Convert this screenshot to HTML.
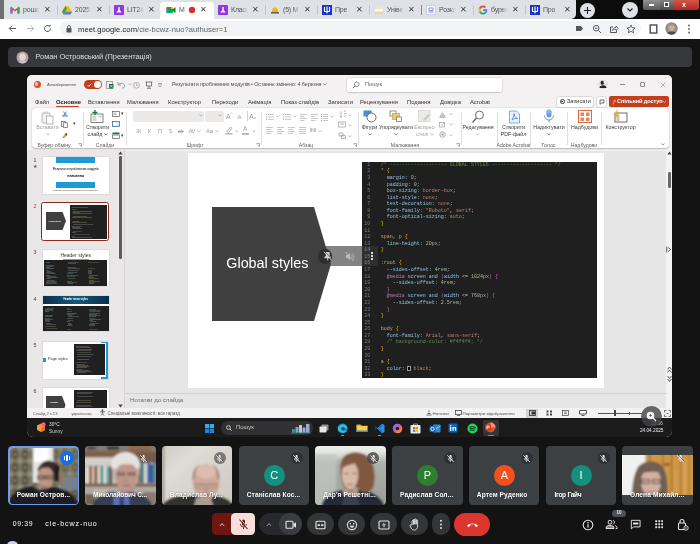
<!DOCTYPE html>
<html>
<head>
<meta charset="utf-8">
<style>
*{box-sizing:border-box;margin:0;padding:0}
html,body{width:700px;height:544px;overflow:hidden}
body{background:#131314;font-family:"Liberation Sans",sans-serif;position:relative;color:#fff}
.a{position:absolute}
.t{position:absolute;white-space:nowrap;line-height:1}
/* chrome */
#tabstrip{left:0;top:0;width:700px;height:19px;background:#0c0c0c}
#tabbg{left:0;top:0;width:576px;height:19px;background:#dee1e6;border-radius:0 0 5px 0}
#toolbar{left:0;top:19px;width:700px;height:20px;background:#fff}
#urlpill{left:60px;top:21px;width:581px;height:15px;border-radius:8px;background:#f1f3f4}
.tab{position:absolute;top:0;height:19px;width:52px}
.tab .ic{position:absolute;left:5px;top:4.500px;width:10px;height:10px}
.tab .tt{position:absolute;left:18px;top:6px;font-size:7px;color:#50545a;-webkit-mask-image:linear-gradient(90deg,#000 60%,transparent);white-space:nowrap;width:17px;overflow:hidden;line-height:8px;letter-spacing:-0.2px}
.tab .x{position:absolute;left:39px;top:5.5px;font-size:8px;color:#3c4043;line-height:8px}
/* presenter bar */
#pbar{left:8px;top:47px;width:684px;height:20px;border-radius:4px;background:#37383b}
/* powerpoint */
#ppt{left:27px;top:75px;width:644.800px;height:362px;border-radius:5px 5px 6px 6px;background:#e6e6e6;overflow:hidden}
#ppt .titlebar{left:0;top:0;width:645px;height:75.500px;background:#f3f1f1}
#ribbon{left:5px;top:33.300px;width:636.500px;height:40px;background:#fff;border-radius:4px;box-shadow:0 0.5px 1.5px rgba(0,0,0,.25)}
#status{left:0;top:333px;width:645px;height:10px;background:#f3f1f1}
#taskbar{left:0;top:343px;width:645px;height:19px;background:#1b1b1b}
#slide{left:161px;top:78px;width:416px;height:234px;background:#fff}
#code{left:335.300px;top:86.700px;width:234.700px;height:216.600px;background:#1f1f1f;overflow:hidden}

.r{position:absolute;white-space:nowrap;line-height:1;font-size:5.300px;color:#3b3a39}
.rg{color:#a19f9d}
.rl{position:absolute;white-space:nowrap;line-height:1;font-size:5.200px;color:#605e5c}
.dv{position:absolute;top:37px;width:1px;height:33px;background:#e1dfdd}
.mt{position:absolute;white-space:nowrap;line-height:1;font-size:5.800px;color:#323130;top:24.500px}

#code{font-family:"Liberation Mono",monospace;font-size:5px;line-height:6.580px;color:#d4d4d4;white-space:pre}
#code .ln{position:absolute;left:0;top:.100px;width:8px;text-align:right;color:#7b7b7b}
#code .cd{position:absolute;left:18.500px;top:.100px;opacity:.88}
.cm{color:#6a9955}.sl{color:#d7ba7d}.pr{color:#9cdcfe}.vl{color:#ce9178}.nm2{color:#b5cea8}.b1{color:#ffd700}.b2{color:#da70d6}.b3{color:#179fff}.kw{color:#c586c0}
/* tiles */
.tile{position:absolute;top:446px;width:70.700px;height:58.800px;border-radius:4px;background:#3c4043;overflow:hidden}
.av{position:absolute;left:25px;top:19px;width:21px;height:21px;border-radius:50%;color:#fff;font-size:11px;text-align:center;line-height:21px}
.nm{position:absolute;left:8px;top:45px;font-size:6.6px;color:#fff;white-space:nowrap;line-height:8px;font-weight:bold;letter-spacing:.1px;text-shadow:0 0 1.500px rgba(0,0,0,.55)}
.mu{position:absolute;left:52px;top:6px;width:12px;height:12px;border-radius:50%;background:rgba(32,33,36,.65)}
/* bottom controls */
.pill{position:absolute;top:513px;height:22px;border-radius:11px;background:#333537}
</style>
</head>
<body>
<div id="wrap" style="position:absolute;left:0;top:0;width:700px;height:544px;will-change:transform">
<!-- CHROME -->
<div class="a" id="tabstrip"></div>
<div class="a" id="tabbg"></div>
<div class="a" style="left:0;top:0;width:4px;height:19px;background:#6f6f70"></div>
<div class="a" style="left:160px;top:2px;width:54px;height:17px;background:#fff;border-radius:4px 4px 0 0"></div>
<!-- tabs -->
<div class="tab" style="left:5px"><svg class="ic" viewBox="0 0 10 10"><path d="M0.5 2v6.5h2V4.6L5 6.6l2.5-2V8.5h2V2L9 1.6 5 4.7 1 1.6z" fill="#ea4335"/><rect x="0.5" y="3" width="2" height="5.5" fill="#4285f4"/><rect x="7.5" y="3" width="2" height="5.5" fill="#34a853"/></svg><div class="tt">рошс</div><div class="x">✕</div></div>
<div class="tab" style="left:57px"><svg class="ic" viewBox="0 0 10 10"><path d="M3.4 1h3.2L10 6.8 8.4 9.5H1.6L0 6.8z" fill="#fbbc04"/><path d="M3.4 1L0 6.8l1.6 2.7L5 3.7z" fill="#34a853"/><path d="M1.6 9.5h6.8L10 6.8H3.2z" fill="#4285f4"/></svg><div class="tt">2025</div><div class="x">✕</div></div>
<div class="tab" style="left:109px"><div class="ic" style="background:#9334e6;border-radius:1px"></div><svg class="ic" viewBox="0 0 10 10"><path d="M4.3 2h1.4v3l2 2.6H2.3l2-2.6z" fill="#fff"/></svg><div class="tt">LIT24</div><div class="x">✕</div></div>
<div class="tab" style="left:161px"><svg class="ic" viewBox="0 0 10 10"><rect x="0.5" y="2" width="6.5" height="6" rx="1" fill="#00ac47"/><path d="M7 4l2.5-2v6L7 6z" fill="#00832d"/><rect x="0.5" y="2" width="2" height="2" fill="#ea4335"/><rect x="5" y="2" width="2" height="2" fill="#ffba00"/><rect x="0.5" y="4" width="2" height="4" fill="#2684fc"/></svg><div class="tt" style="width:8px">М</div><div class="a" style="left:28px;top:6.500px;width:6px;height:6px;border-radius:50%;background:#d93025;box-shadow:0 0 1px #d93025"></div><div class="x">✕</div></div>
<div class="tab" style="left:213px"><div class="ic" style="background:#9334e6;border-radius:1px"></div><svg class="ic" viewBox="0 0 10 10"><path d="M4.3 2h1.4v3l2 2.6H2.3l2-2.6z" fill="#fff"/></svg><div class="tt">Класі</div><div class="x">✕</div></div>
<div class="tab" style="left:265px"><svg class="ic" viewBox="0 0 10 10"><path d="M2 7c0-3 1-4.5 3-4.5S8 4 8 7z" fill="#f4b400"/><rect x="1" y="7" width="8" height="1.6" fill="#5f6368"/></svg><div class="tt">(5) М</div><div class="x">✕</div></div>
<div class="tab" style="left:317px"><div class="ic" style="background:#1a35c4"></div><svg class="ic" viewBox="0 0 10 10"><path d="M2.5 2v4.5h5V2M5 1.5v7" stroke="#fff" stroke-width="1.1" fill="none"/></svg><div class="tt">Пре</div><div class="x">✕</div></div>
<div class="tab" style="left:369px"><svg class="ic" viewBox="0 0 10 10"><path d="M1 8.5c0-5 1.5-7 4-7s4 2 4 7z" fill="#f3e9b5"/><rect x="1" y="4.5" width="8" height="1.4" fill="#fff"/><rect x="1" y="7.5" width="8" height="1.2" fill="#e4d27c"/></svg><div class="tt">Уніве</div><div class="x">✕</div></div>
<div class="tab" style="left:421px"><div class="ic" style="background:#f4f6fb;border:0.5px solid #c9d0e4"></div><svg class="ic" viewBox="0 0 10 10"><path d="M3 3h4v2.5H3zM2.5 7h5" stroke="#8b97c6" stroke-width="1" fill="none"/></svg><div class="tt">Розкл</div><div class="x">✕</div></div>
<div class="tab" style="left:473px"><svg class="ic" viewBox="0 0 10 10"><path d="M9.3 5.1c0-.3 0-.6-.1-.9H5v1.7h2.4c-.1.6-.4 1-.9 1.400l1.400 1.100C8.800 7.600 9.300 6.500 9.300 5.100z" fill="#4285f4"/><path d="M5 9.500c1.200 0 2.200-.4 3-1.100L6.600 7.300c-.4.300-.9.400-1.600.4-1.200 0-2.200-.8-2.500-1.900L1 6.900C1.700 8.400 3.200 9.500 5 9.500z" fill="#34a853"/><path d="M2.500 5.800c-.2-.5-.2-1.100 0-1.600L1 3.100c-.6 1.200-.6 2.600 0 3.800z" fill="#fbbc05"/><path d="M5 2.300c.7 0 1.300.2 1.800.7l1.300-1.300C7.200.9 6.200.5 5 .5 3.200.5 1.700 1.600 1 3.100l1.500 1.100C2.800 3.100 3.800 2.300 5 2.300z" fill="#ea4335"/></svg><div class="tt">бурен</div><div class="x">✕</div></div>
<div class="tab" style="left:525px"><div class="ic" style="background:#1a35c4"></div><svg class="ic" viewBox="0 0 10 10"><path d="M2.500 2v4.500h5V2M5 1.500v7" stroke="#fff" stroke-width="1.100" fill="none"/></svg><div class="tt">Про</div><div class="x">✕</div></div>
<!-- tab separators -->
<div class="a" style="left:57px;top:5px;width:1px;height:10px;background:#9aa0a6;opacity:.4"></div>
<div class="a" style="left:109px;top:5px;width:1px;height:10px;background:#9aa0a6;opacity:.4"></div>
<div class="a" style="left:265px;top:5px;width:1px;height:10px;background:#9aa0a6;opacity:.4"></div>
<div class="a" style="left:317px;top:5px;width:1px;height:10px;background:#9aa0a6;opacity:.4"></div>
<div class="a" style="left:369px;top:5px;width:1px;height:10px;background:#9aa0a6;opacity:.4"></div>
<div class="a" style="left:421px;top:5px;width:1px;height:10px;background:#80868b"></div>
<div class="a" style="left:473px;top:5px;width:1px;height:10px;background:#9aa0a6;opacity:.4"></div>
<div class="a" style="left:525px;top:5px;width:1px;height:10px;background:#9aa0a6;opacity:.4"></div>
<!-- new tab / controls -->
<div class="a" style="left:580px;top:3px;width:15px;height:15px;border-radius:50%;background:#dee1e6"></div>
<svg class="a" style="left:583px;top:6px" width="9" height="9" viewBox="0 0 9 9"><path d="M4.500 1v7M1 4.500h7" stroke="#202124" stroke-width="1.100"/></svg>
<div class="a" style="left:622px;top:2px;width:16px;height:16px;border-radius:50%;background:#dee1e6"></div>
<svg class="a" style="left:626px;top:7px" width="8" height="6" viewBox="0 0 8 6"><path d="M1.500 1.500L4 4l2.500-2.500" stroke="#202124" stroke-width="1.100" fill="none"/></svg>
<div class="a" style="left:643px;top:0;width:17px;height:9.500px;background:linear-gradient(180deg,#8f8f8f,#5a5a5a);border-radius:0 0 0 2px"></div>
<div class="a" style="left:660px;top:0;width:14px;height:9.500px;background:linear-gradient(180deg,#7f7f7f,#4c4c4c)"></div>
<div class="a" style="left:674px;top:0;width:25px;height:9.500px;background:linear-gradient(180deg,#d4574a,#b3291d);border-radius:0 0 2px 0"></div>
<div class="a" style="left:649px;top:4px;width:5px;height:2px;background:#fff"></div>
<div class="a" style="left:664px;top:2px;width:5px;height:5px;border:1px solid #fff;background:#444"></div>
<div class="t" style="left:682px;top:1px;font-size:7px;font-weight:bold;color:#fff">x</div>
<!-- toolbar -->
<div class="a" id="toolbar"></div>
<div class="a" id="urlpill"></div>
<svg class="a" style="left:8px;top:24px" width="9" height="9" viewBox="0 0 9 9"><path d="M8 4.500H1.500M4.300 1.500L1.300 4.500l3 3" stroke="#54585d" stroke-width="1" fill="none"/></svg>
<svg class="a" style="left:26px;top:24px" width="9" height="9" viewBox="0 0 9 9"><path d="M1 4.500h6.500M4.700 1.500l3 3-3 3" stroke="#b0b3b8" stroke-width="1" fill="none"/></svg>
<svg class="a" style="left:43px;top:24px" width="9" height="9" viewBox="0 0 9 9"><path d="M7.500 4.500a3 3 0 1 1-1-2.200" stroke="#54585d" stroke-width="1" fill="none"/><path d="M5.300 2.600h2.200V.4z" fill="#54585d"/></svg>
<svg class="a" style="left:66px;top:25px" width="6" height="8" viewBox="0 0 6 8"><rect x="0.500" y="3" width="5" height="4.500" rx=".6" fill="#54585d"/><path d="M1.500 3V2a1.500 1.500 0 0 1 3 0v1" stroke="#54585d" stroke-width=".9" fill="none"/></svg>
<div class="t" style="left:78px;top:25.500px;font-size:7.600px;color:#202124;letter-spacing:.05px">meet.google.com<span style="color:#5f6368">/cie-bcwz-nuo?authuser=1</span></div>
<svg class="a" style="left:575px;top:25px" width="9" height="7" viewBox="0 0 9 7"><path d="M1 1h5l2 2.500-2 2.500H1z" fill="#54585d"/></svg>
<svg class="a" style="left:592px;top:24px" width="10" height="10" viewBox="0 0 10 10"><circle cx="4.200" cy="4.200" r="2.800" stroke="#54585d" stroke-width="1" fill="none"/><path d="M6.300 6.300L9 9M3 4.200h2.400" stroke="#54585d" stroke-width="1"/></svg>
<svg class="a" style="left:609px;top:24px" width="10" height="10" viewBox="0 0 10 10"><path d="M4 3H1.500v5.500h6V6.500" stroke="#54585d" stroke-width="1" fill="none"/><path d="M3.500 6.500C3.800 4.500 5 3.500 7 3.500V2l2.300 2.300L7 6.500V5.200c-1.500 0-2.700.3-3.500 1.300z" fill="none" stroke="#54585d" stroke-width=".8"/></svg>
<svg class="a" style="left:626px;top:24px" width="10" height="10" viewBox="0 0 10 10"><path d="M5 1l1.200 2.700 2.900.3-2.200 1.900.7 2.900L5 7.300 2.400 8.800l.7-2.900L.9 4l2.900-.3z" stroke="#54585d" stroke-width=".9" fill="none"/></svg>
<svg class="a" style="left:649px;top:24px" width="9" height="10" viewBox="0 0 9 10"><rect x="1.200" y="1" width="6.600" height="8" stroke="#3c4043" stroke-width="1.300" fill="#fff"/></svg>
<svg class="a" style="left:665px;top:22px" width="13" height="13" viewBox="0 0 13 13"><defs><clipPath id="cav"><circle cx="6.500" cy="6.500" r="6.200"/></clipPath></defs><g clip-path="url(#cav)"><rect width="13" height="13" fill="#8a8f98"/><ellipse cx="6.500" cy="5.500" rx="3.200" ry="3.600" fill="#d9a98c"/><path d="M2.500 4.500c.5-3 7.500-3 8 0-1-1.200-7-1.200-8 0z" fill="#b5845e"/><ellipse cx="6.500" cy="13" rx="5.500" ry="3.500" fill="#4a4f5a"/></g></svg>
<svg class="a" style="left:687px;top:24px" width="4" height="10" viewBox="0 0 4 10"><circle cx="2" cy="1.500" r=".9" fill="#54585d"/><circle cx="2" cy="5" r=".9" fill="#54585d"/><circle cx="2" cy="8.500" r=".9" fill="#54585d"/></svg>
<!-- PRESENTER BAR -->
<div class="a" id="pbar"></div>
<svg class="a" style="left:16px;top:50.500px" width="13" height="13" viewBox="0 0 13 13"><defs><clipPath id="pav"><circle cx="6.500" cy="6.500" r="6"/></clipPath></defs><g clip-path="url(#pav)"><rect width="13" height="13" fill="#a9a3a6"/><ellipse cx="6.500" cy="6" rx="3.300" ry="3.800" fill="#e9d3cf"/><ellipse cx="6.500" cy="13.500" rx="6" ry="4" fill="#c9c3cc"/></g></svg>
<div class="t" style="left:35.500px;top:53px;font-size:7.450px;color:#dcdee1;letter-spacing:-.05px" id="ptxt">Роман Островський (Презентація)</div>
<!-- POWERPOINT -->
<div class="a" id="ppt">
  <div class="a titlebar"></div>
  <div class="a" style="left:6.5px;top:5.5px;width:7px;height:7px;border-radius:50%;background:#d35230"></div>
  <div class="a" style="left:8px;top:7px;width:3px;height:4px;border-radius:50%;background:#f7c9b9"></div>
  <div class="r" style="left:20px;top:7.500px;font-size:4.200px;letter-spacing:-.25px;color:#555" id="autos">Автозбереження</div>
  <div class="a" style="left:57px;top:4.8px;width:17.500px;height:9.500px;border-radius:5px;background:#c43e1c"></div>
  <div class="a" style="left:66.5px;top:6px;width:7px;height:7px;border-radius:50%;background:#fff"></div>
  <svg class="a" style="left:59.5px;top:7.5px" width="5" height="4" viewBox="0 0 5 4"><path d="M.6 2l1.300 1.300L4.400.6" stroke="#fff" stroke-width=".8" fill="none"/></svg>
  <svg class="a" style="left:78.5px;top:5.5px" width="8" height="8" viewBox="0 0 8 8"><rect x=".5" y=".5" width="6" height="7" fill="none" stroke="#8a8886" stroke-width=".7"/><rect x="3" y="3" width="4.500" height="4.500" fill="#107c41"/><path d="M4 4l2.500 2.500M6.500 4L4 6.500" stroke="#fff" stroke-width=".6"/></svg>
  <svg class="a" style="left:90px;top:5.5px" width="9" height="8" viewBox="0 0 9 8"><path d="M1 1v3h3M1.300 4C2.500 2 5.500 1.500 7 3.500S7 7 5 7" stroke="#8a8886" stroke-width=".8" fill="none"/></svg>
  <div class="r rg" style="left:100.5px;top:7.5px;font-size:4px"><svg width="3.800" height="2.600" viewBox="0 0 6 4" style="vertical-align:middle;overflow:visible"><path d="M.6.600L3 3.200 5.400.600" stroke="currentColor" fill="none" stroke-width="1"/></svg></div>
  <svg class="a" style="left:105px;top:5.5px" width="9" height="8" viewBox="0 0 9 8"><circle cx="4.500" cy="4.300" r="2.900" stroke="#a19f9d" stroke-width=".8" fill="none"/><path d="M4.500 2.500v2h1.500" stroke="#a19f9d" stroke-width=".7" fill="none"/></svg>
  <svg class="a" style="left:117.5px;top:5.5px" width="8" height="8" viewBox="0 0 8 8"><path d="M.5 1h7M1.500 1v4h5V1M4 5v2M2 7.300h4" stroke="#605e5c" stroke-width=".8" fill="none"/></svg>
  <svg class="a" style="left:130px;top:7.5px" width="6" height="5" viewBox="0 0 6 5"><path d="M1 .8h4M1.500 2.300L3 3.800l1.500-1.500" stroke="#605e5c" stroke-width=".7" fill="none"/></svg>
  <div class="r" style="left:145px;top:7px;font-size:5.420px;letter-spacing:-.1px;color:#505050">Результати проблемних модулів • Останнє змінено: 4 березня <svg width="3.800" height="2.600" viewBox="0 0 6 4" style="vertical-align:middle;overflow:visible"><path d="M.6.600L3 3.200 5.400.600" stroke="currentColor" fill="none" stroke-width="1"/></svg></div>
  <div class="a" style="left:320px;top:3px;width:155px;height:13.500px;border-radius:2px;background:#fff;box-shadow:0 0 0 .5px #d8d6d4, 0 .5px 1px rgba(0,0,0,.2)"></div>
  <svg class="a" style="left:325px;top:5.5px" width="8" height="8" viewBox="0 0 8 8"><circle cx="4.700" cy="3.300" r="2.300" stroke="#605e5c" stroke-width=".7" fill="none"/><path d="M3 5L.8 7.200" stroke="#605e5c" stroke-width=".8"/></svg>
  <div class="r" style="left:338px;top:6.8px;font-size:5.600px;color:#605e5c">Пошук</div>
  <svg class="a" style="left:571px;top:4px" width="10" height="11" viewBox="0 0 10 11"><circle cx="5" cy="5.500" r="4.800" fill="#e1dfdd"/><circle cx="4.500" cy="3.800" r="2" fill="#252423"/><path d="M1.500 9c.3-2 1.500-2.800 3.500-2.800S8.200 7 8.500 9z" fill="#252423"/><rect x="5.500" y="2" width="2.500" height="2.500" fill="#fff" opacity=".8"/></svg>
  <div class="a" style="left:593px;top:9.3px;width:5px;height:.7px;background:#8a8886"></div>
  <div class="a" style="left:613px;top:7px;width:5px;height:5px;border:.7px solid #8a8886;border-radius:1px"></div>
  <svg class="a" style="left:633px;top:7px" width="6" height="6" viewBox="0 0 6 6"><path d="M.7.700l4.600 4.600M5.300.700L.7 5.300" stroke="#8a8886" stroke-width=".6"/></svg>
  <div class="mt" style="left:8px">Файл</div>
  <div class="mt" style="left:29px;font-weight:bold;color:#201f1e">Основне</div>
  <div class="mt" style="left:61px">Вставлення</div>
  <div class="mt" style="left:100px">Малювання</div>
  <div class="mt" style="left:141px">Конструктор</div>
  <div class="mt" style="left:185px">Переходи</div>
  <div class="mt" style="left:221px">Анімація</div>
  <div class="mt" style="left:254px">Показ слайдів</div>
  <div class="mt" style="left:301px">Записати</div>
  <div class="mt" style="left:333px">Рецензування</div>
  <div class="mt" style="left:380px">Подання</div>
  <div class="mt" style="left:413px">Довідка</div>
  <div class="mt" style="left:443px">Acrobat</div>
  <div class="a" style="left:29px;top:31px;width:23px;height:1.300px;background:#c43e1c;border-radius:1px"></div>
  <div class="a" style="left:530px;top:21.5px;width:36px;height:10px;border-radius:2px;background:#fff;box-shadow:0 0 0 .5px #c8c6c4"></div>
  <div class="a" style="left:533px;top:24.3px;width:4.500px;height:4.500px;border-radius:50%;border:.8px solid #444"></div>
  <div class="a" style="left:534.4px;top:25.7px;width:1.700px;height:1.700px;border-radius:50%;background:#444"></div>
  <div class="r" style="left:540px;top:24px;font-size:5.500px;color:#323130">Записати</div>
  <div class="a" style="left:570px;top:21.5px;width:8.500px;height:10px;border-radius:2px;background:#fff;box-shadow:0 0 0 .5px #c8c6c4"></div>
  <svg class="a" style="left:571.5px;top:23.5px" width="6" height="6" viewBox="0 0 6 6"><path d="M1 1h4v3H2.500L1 5.300z" stroke="#323130" stroke-width=".7" fill="none"/></svg>
  <div class="a" style="left:582px;top:21px;width:59.500px;height:10.500px;border-radius:2px;background:#c43e1c"></div>
  <div class="r" style="left:590px;top:23.8px;font-size:5.600px;color:#fff;font-weight:bold;letter-spacing:-.1px">Спільний доступ</div>
  <svg class="a" style="left:584.5px;top:23.5px" width="5" height="6" viewBox="0 0 5 6"><path d="M1 5.500L2.500.8 4 3" stroke="#f7c9b9" stroke-width=".7" fill="none"/></svg>
  <svg class="a" style="left:635px;top:25px" width="5" height="4" viewBox="0 0 5 4"><path d="M.8.800L2.500 2.500 4.200.800" stroke="#f7c9b9" stroke-width=".7" fill="none"/></svg>
  <div class="a" id="ribbon">
<svg class="a" style="left:9px;top:1.5px" width="13" height="15" viewBox="0 0 13 15"><rect x="1" y="3" width="8" height="10" rx="1" fill="#f3f2f1" stroke="#b3b0ad" stroke-width=".9"/><rect x="3" y="1.500" width="4" height="2.500" rx=".8" fill="#d2d0ce"/><rect x="5.500" y="6" width="6.500" height="8" fill="#fff" stroke="#b3b0ad" stroke-width=".9"/></svg>
<div class="r rg" style="left:-14.5px;width:60px;text-align:center;top:17px;">Вставити</div>
<div class="r rg" style="left:-14.5px;width:60px;text-align:center;top:23px;font-size:5px"><svg width="3.800" height="2.600" viewBox="0 0 6 4" style="vertical-align:middle;overflow:visible"><path d="M.6.600L3 3.200 5.400.600" stroke="currentColor" fill="none" stroke-width="1"/></svg></div>
<svg class="a" style="left:29.5px;top:3px" width="6" height="6" viewBox="0 0 6 6"><path d="M1.500 .5l2.500 4M4.500.5L2 4.500" stroke="#2b579a" stroke-width=".7"/><circle cx="1.500" cy="5" r=".9" fill="none" stroke="#2b579a" stroke-width=".6"/><circle cx="4.500" cy="5" r=".9" fill="none" stroke="#2b579a" stroke-width=".6"/></svg>
<svg class="a" style="left:29px;top:12.5px" width="7" height="7" viewBox="0 0 7 7"><rect x=".5" y=".5" width="4" height="5" fill="#fff" stroke="#605e5c" stroke-width=".7"/><rect x="2.300" y="1.800" width="4" height="4.700" fill="#fff" stroke="#605e5c" stroke-width=".7"/></svg>
<div class="r" style="left:40.5px;top:14px;font-size:4.500px;color:#444">▾</div>
<svg class="a" style="left:29px;top:23.5px" width="7" height="7" viewBox="0 0 7 7"><path d="M1 5.500l2.500-3 2 1.500-2.500 2.500z" fill="#e9a33a"/><path d="M3.500 2.500L5 .8l1.500 1.200L5.500 4z" fill="#605e5c"/></svg>
<div class="rl" style="left:-8px;width:60px;text-align:center;top:35px;">Буфер обміну</div>
<svg class="a" style="left:45.5px;top:35px" width="4" height="4" viewBox="0 0 4 4"><path d="M.5.500h3v3M3.500 3.500l-2-2" stroke="#605e5c" stroke-width=".5" fill="none"/></svg>
<div class="a" style="left:51px;top:4px;width:1px;height:33px;background:#e3e1df"></div>
<svg class="a" style="left:57.5px;top:1.5px" width="16" height="14" viewBox="0 0 16 14"><rect x="1" y="4" width="12" height="8.500" fill="#fff" stroke="#797775" stroke-width=".9"/><rect x="2.500" y="5.500" width="4" height="5.500" fill="#d8d6d4"/><path d="M5 0v5M2.500 2.500h5" stroke="#107c41" stroke-width="1.300"/><rect x="8" y="5.500" width="4" height="2" fill="#d8d6d4"/></svg>
<div class="r" style="left:35.5px;width:60px;text-align:center;top:17px;">Створити</div>
<div class="r" style="left:35.5px;width:60px;text-align:center;top:23.3px;">слайд <svg width="3.800" height="2.600" viewBox="0 0 6 4" style="vertical-align:middle;overflow:visible"><path d="M.6.600L3 3.200 5.400.600" stroke="currentColor" fill="none" stroke-width="1"/></svg></div>
<svg class="a" style="left:79.5px;top:2.5px" width="8" height="6" viewBox="0 0 8 6"><rect x=".5" y=".5" width="7" height="5" fill="#fff" stroke="#605e5c" stroke-width=".7"/><rect x="1.500" y="1.500" width="3" height="3" fill="#c8c6c4"/></svg>
<div class="r" style="left:88.5px;top:3.5px;font-size:4.500px;color:#444">▾</div>
<svg class="a" style="left:79.5px;top:13px" width="8" height="6" viewBox="0 0 8 6"><rect x=".5" y=".5" width="7" height="5" fill="#deecf9" stroke="#2b579a" stroke-width=".7"/><rect x="1.500" y="1.500" width="3" height="3" fill="#fff"/></svg>
<svg class="a" style="left:79.5px;top:23.5px" width="8" height="7" viewBox="0 0 8 7"><rect x=".5" y=".5" width="7" height="1.800" fill="#107c41"/><rect x=".5" y="3" width="7" height="3.500" fill="#fff" stroke="#605e5c" stroke-width=".7"/></svg>
<div class="r" style="left:88.5px;top:25.5px;font-size:4.500px;color:#444">▾</div>
<div class="rl" style="left:43px;width:60px;text-align:center;top:35px;">Слайди</div>
<div class="a" style="left:94px;top:4px;width:1px;height:33px;background:#e3e1df"></div>
<div class="a" style="left:100.5px;top:3px;width:71.500px;height:10.500px;background:#ebe9e8;border-radius:2px"></div>
<div class="a" style="left:173px;top:3px;width:18.500px;height:10.500px;background:#ebe9e8;border-radius:2px"></div>
<div class="r rg" style="left:166.5px;top:5px;font-size:4.500px"><svg width="3.800" height="2.600" viewBox="0 0 6 4" style="vertical-align:middle;overflow:visible"><path d="M.6.600L3 3.200 5.400.600" stroke="currentColor" fill="none" stroke-width="1"/></svg></div>
<div class="r rg" style="left:186px;top:5px;font-size:4.500px"><svg width="3.800" height="2.600" viewBox="0 0 6 4" style="vertical-align:middle;overflow:visible"><path d="M.6.600L3 3.200 5.400.600" stroke="currentColor" fill="none" stroke-width="1"/></svg></div>
<div class="r rg" style="left:194px;top:4.5px;font-size:7px">A<span style="font-size:3.500px;vertical-align:top">^</span></div>
<div class="r rg" style="left:205.5px;top:5.5px;font-size:6px">A<span style="font-size:3.500px;vertical-align:top">ˇ</span></div>
<div class="a" style="left:215px;top:3px;width:.7px;height:10px;background:#d2d0ce"></div>
<div class="r rg" style="left:217px;top:4.5px;font-size:7px">A<span style="font-size:4px">ᴏ</span></div>
<div class="r rg" style="left:104px;top:19.5px;font-size:6px">Ж</div>
<div class="r rg" style="left:115.5px;top:19.5px;font-size:6px">К</div>
<div class="r rg" style="left:126px;top:19.5px;font-size:6px">П</div>
<div class="r rg" style="left:136.5px;top:19.5px;font-size:6px">S</div>
<div class="r rg" style="left:146px;top:20.5px;font-size:5px;text-decoration:line-through">ab</div>
<div class="r rg" style="left:156.5px;top:19.5px;font-size:6px;letter-spacing:-.5px">AV</div>
<div class="r rg" style="left:165px;top:21px;font-size:4px"><svg width="3.800" height="2.600" viewBox="0 0 6 4" style="vertical-align:middle;overflow:visible"><path d="M.6.600L3 3.200 5.400.600" stroke="currentColor" fill="none" stroke-width="1"/></svg></div>
<div class="r rg" style="left:174px;top:19.5px;font-size:6px;letter-spacing:-.3px">Aa</div>
<div class="r rg" style="left:183px;top:21px;font-size:4px"><svg width="3.800" height="2.600" viewBox="0 0 6 4" style="vertical-align:middle;overflow:visible"><path d="M.6.600L3 3.200 5.400.600" stroke="currentColor" fill="none" stroke-width="1"/></svg></div>
<svg class="a" style="left:192.5px;top:18px" width="8" height="9" viewBox="0 0 8 9"><path d="M2 5.500L5.500 1l1.500 1.200L3.500 6.500z" fill="none" stroke="#a19f9d" stroke-width=".7"/><rect x=".5" y="7" width="7" height="1.600" fill="#bdbbb9"/></svg>
<div class="r rg" style="left:202.5px;top:21px;font-size:4px"><svg width="3.800" height="2.600" viewBox="0 0 6 4" style="vertical-align:middle;overflow:visible"><path d="M.6.600L3 3.200 5.400.600" stroke="currentColor" fill="none" stroke-width="1"/></svg></div>
<div class="r rg" style="left:211px;top:18px;font-size:6.500px">A</div>
<div class="a" style="left:210px;top:25px;width:7px;height:1.600px;background:#bdbbb9"></div>
<div class="r rg" style="left:220px;top:21px;font-size:4px"><svg width="3.800" height="2.600" viewBox="0 0 6 4" style="vertical-align:middle;overflow:visible"><path d="M.6.600L3 3.200 5.400.600" stroke="currentColor" fill="none" stroke-width="1"/></svg></div>
<div class="rl" style="left:133px;width:60px;text-align:center;top:35px;">Шрифт</div>
<svg class="a" style="left:223.5px;top:35px" width="4" height="4" viewBox="0 0 4 4"><path d="M.5.500h3v3M3.500 3.500l-2-2" stroke="#605e5c" stroke-width=".5" fill="none"/></svg>
<div class="a" style="left:229px;top:4px;width:1px;height:33px;background:#e3e1df"></div>
<svg class="a" style="left:233.5px;top:5.5px" width="8" height="7.8999999999999995" viewBox="0 0 8 7.8999999999999995"><rect x="2" y="0.3" width="6" height=".7" fill="#b1afad"/><rect x="0" y="0.1" width="1" height="1" fill="#a19f9d"/><rect x="2" y="2.5999999999999996" width="6" height=".7" fill="#b1afad"/><rect x="0" y="2.4" width="1" height="1" fill="#a19f9d"/><rect x="2" y="4.8999999999999995" width="6" height=".7" fill="#b1afad"/><rect x="0" y="4.699999999999999" width="1" height="1" fill="#a19f9d"/></svg>
<div class="r rg" style="left:243.5px;top:6px;font-size:4px"><svg width="3.800" height="2.600" viewBox="0 0 6 4" style="vertical-align:middle;overflow:visible"><path d="M.6.600L3 3.200 5.400.600" stroke="currentColor" fill="none" stroke-width="1"/></svg></div>
<svg class="a" style="left:250.5px;top:5.5px" width="8" height="7.8999999999999995" viewBox="0 0 8 7.8999999999999995"><rect x="2" y="0.3" width="6" height=".7" fill="#b1afad"/><rect x="0" y="0.1" width="1" height="1" fill="#a19f9d"/><rect x="2" y="2.5999999999999996" width="6" height=".7" fill="#b1afad"/><rect x="0" y="2.4" width="1" height="1" fill="#a19f9d"/><rect x="2" y="4.8999999999999995" width="6" height=".7" fill="#b1afad"/><rect x="0" y="4.699999999999999" width="1" height="1" fill="#a19f9d"/></svg>
<div class="r rg" style="left:260.5px;top:6px;font-size:4px"><svg width="3.800" height="2.600" viewBox="0 0 6 4" style="vertical-align:middle;overflow:visible"><path d="M.6.600L3 3.200 5.400.600" stroke="currentColor" fill="none" stroke-width="1"/></svg></div>
<svg class="a" style="left:267.5px;top:5.5px" width="7" height="9" viewBox="0 0 7 9"><rect x="0" y="0.3" width="7" height=".7" fill="#b1afad"/><rect x="0" y="2.3" width="4.5" height=".7" fill="#b1afad"/><rect x="0" y="4.3" width="7" height=".7" fill="#b1afad"/><rect x="0" y="6.3" width="4.5" height=".7" fill="#b1afad"/></svg>
<svg class="a" style="left:278.5px;top:5.5px" width="7" height="9" viewBox="0 0 7 9"><rect x="0" y="0.3" width="7" height=".7" fill="#b1afad"/><rect x="0" y="2.3" width="4.5" height=".7" fill="#b1afad"/><rect x="0" y="4.3" width="7" height=".7" fill="#b1afad"/><rect x="0" y="6.3" width="4.5" height=".7" fill="#b1afad"/></svg>
<svg class="a" style="left:289px;top:5.5px" width="7" height="9" viewBox="0 0 7 9"><rect x="2" y="0.3" width="5" height=".7" fill="#b1afad"/><rect x="0" y="0.1" width="1" height="1" fill="#a19f9d"/><rect x="2" y="2.3" width="5" height=".7" fill="#b1afad"/><rect x="0" y="2.1" width="1" height="1" fill="#a19f9d"/><rect x="2" y="4.3" width="5" height=".7" fill="#b1afad"/><rect x="0" y="4.1" width="1" height="1" fill="#a19f9d"/><rect x="2" y="6.3" width="5" height=".7" fill="#b1afad"/><rect x="0" y="6.1" width="1" height="1" fill="#a19f9d"/></svg>
<div class="r rg" style="left:298px;top:6px;font-size:4px"><svg width="3.800" height="2.600" viewBox="0 0 6 4" style="vertical-align:middle;overflow:visible"><path d="M.6.600L3 3.200 5.400.600" stroke="currentColor" fill="none" stroke-width="1"/></svg></div>
<svg class="a" style="left:233.5px;top:18.5px" width="7" height="9" viewBox="0 0 7 9"><rect x="0" y="0.3" width="7" height=".7" fill="#b1afad"/><rect x="0" y="2.3" width="5" height=".7" fill="#b1afad"/><rect x="0" y="4.3" width="7" height=".7" fill="#b1afad"/><rect x="0" y="6.3" width="5" height=".7" fill="#b1afad"/></svg>
<svg class="a" style="left:244.5px;top:18.5px" width="7" height="9" viewBox="0 0 7 9"><rect x="0" y="0.3" width="7" height=".7" fill="#b1afad"/><rect x="0" y="2.3" width="5" height=".7" fill="#b1afad"/><rect x="0" y="4.3" width="7" height=".7" fill="#b1afad"/><rect x="0" y="6.3" width="5" height=".7" fill="#b1afad"/></svg>
<svg class="a" style="left:255.5px;top:18.5px" width="7" height="9" viewBox="0 0 7 9"><rect x="0" y="0.3" width="7" height=".7" fill="#b1afad"/><rect x="0" y="2.3" width="5" height=".7" fill="#b1afad"/><rect x="0" y="4.3" width="7" height=".7" fill="#b1afad"/><rect x="0" y="6.3" width="5" height=".7" fill="#b1afad"/></svg>
<svg class="a" style="left:266.5px;top:18.5px" width="7" height="9" viewBox="0 0 7 9"><rect x="0" y="0.3" width="7" height=".7" fill="#b1afad"/><rect x="0" y="2.3" width="7" height=".7" fill="#b1afad"/><rect x="0" y="4.3" width="7" height=".7" fill="#b1afad"/><rect x="0" y="6.3" width="7" height=".7" fill="#b1afad"/></svg>
<svg class="a" style="left:278px;top:19px" width="6" height="6" viewBox="0 0 6 6"><rect x="0" y="1" width="2.500" height="4" fill="#c8c6c4"/><rect x="3.500" y="1" width="2.500" height="4" fill="#c8c6c4"/></svg>
<div class="r rg" style="left:286px;top:21px;font-size:4px"><svg width="3.800" height="2.600" viewBox="0 0 6 4" style="vertical-align:middle;overflow:visible"><path d="M.6.600L3 3.200 5.400.600" stroke="currentColor" fill="none" stroke-width="1"/></svg></div>
<svg class="a" style="left:306.5px;top:2px" width="8" height="9" viewBox="0 0 8 9"><path d="M2 1v6M1 6l1 1.500L3 6M5 1h2M5 3.500h2.500M5 6h2" stroke="#a19f9d" stroke-width=".7" fill="none"/></svg>
<div class="r rg" style="left:315.5px;top:5px;font-size:4px"><svg width="3.800" height="2.600" viewBox="0 0 6 4" style="vertical-align:middle;overflow:visible"><path d="M.6.600L3 3.200 5.400.600" stroke="currentColor" fill="none" stroke-width="1"/></svg></div>
<svg class="a" style="left:306px;top:13px" width="9" height="7" viewBox="0 0 9 7"><rect x=".5" y="1" width="7" height="5" fill="none" stroke="#a19f9d" stroke-width=".7"/><path d="M2 3h4" stroke="#a19f9d" stroke-width=".7"/></svg>
<div class="r rg" style="left:315.5px;top:15px;font-size:4px"><svg width="3.800" height="2.600" viewBox="0 0 6 4" style="vertical-align:middle;overflow:visible"><path d="M.6.600L3 3.200 5.400.600" stroke="currentColor" fill="none" stroke-width="1"/></svg></div>
<svg class="a" style="left:306px;top:23.5px" width="9" height="7" viewBox="0 0 9 7"><path d="M1 1h4v3H1zM3.500 3.500h4v3h-4z" stroke="#a19f9d" stroke-width=".7" fill="#f3f2f1"/></svg>
<div class="r rg" style="left:315.5px;top:26px;font-size:4px"><svg width="3.800" height="2.600" viewBox="0 0 6 4" style="vertical-align:middle;overflow:visible"><path d="M.6.600L3 3.200 5.400.600" stroke="currentColor" fill="none" stroke-width="1"/></svg></div>
<div class="rl" style="left:244px;width:60px;text-align:center;top:35px;">Абзац</div>
<svg class="a" style="left:320.5px;top:35px" width="4" height="4" viewBox="0 0 4 4"><path d="M.5.500h3v3M3.500 3.500l-2-2" stroke="#605e5c" stroke-width=".5" fill="none"/></svg>
<div class="a" style="left:326px;top:4px;width:1px;height:33px;background:#e3e1df"></div>
<svg class="a" style="left:330.5px;top:1.5px" width="15" height="13" viewBox="0 0 15 13"><rect x=".5" y=".5" width="8" height="6" fill="#4a8ddc"/><circle cx="8.500" cy="7.500" r="4.500" fill="#fff" stroke="#605e5c" stroke-width=".9"/></svg>
<div class="r" style="left:307.5px;width:60px;text-align:center;top:17px;">Фігури</div>
<div class="r" style="left:307.5px;width:60px;text-align:center;top:23px;font-size:5px"><svg width="3.800" height="2.600" viewBox="0 0 6 4" style="vertical-align:middle;overflow:visible"><path d="M.6.600L3 3.200 5.400.600" stroke="currentColor" fill="none" stroke-width="1"/></svg></div>
<svg class="a" style="left:357px;top:1.5px" width="14" height="13" viewBox="0 0 14 13"><rect x="1" y="1" width="6" height="5" fill="#fff" stroke="#797775" stroke-width=".8"/><rect x="3.500" y="3.500" width="7" height="6" fill="#f2c661" stroke="#c19c3c" stroke-width=".6"/><rect x="7.500" y="7" width="5" height="4.500" fill="#fff" stroke="#797775" stroke-width=".8"/></svg>
<div class="r" style="left:334px;width:60px;text-align:center;top:17px;">Упорядкувати</div>
<div class="r" style="left:334px;width:60px;text-align:center;top:23px;font-size:5px"><svg width="3.800" height="2.600" viewBox="0 0 6 4" style="vertical-align:middle;overflow:visible"><path d="M.6.600L3 3.200 5.400.600" stroke="currentColor" fill="none" stroke-width="1"/></svg></div>
<svg class="a" style="left:386px;top:1.5px" width="14" height="13" viewBox="0 0 14 13"><rect x=".5" y=".5" width="11.500" height="11" fill="#edebe9" stroke="#d2d0ce" stroke-width=".7"/><path d="M5 10l5.500-6 1.500 1.300L6.500 11z" fill="#c8c6c4"/></svg>
<div class="r rg" style="left:363px;width:60px;text-align:center;top:17px;">Експрес-</div>
<div class="r rg" style="left:363px;width:60px;text-align:center;top:23.3px;">стилі <svg width="3.800" height="2.600" viewBox="0 0 6 4" style="vertical-align:middle;overflow:visible"><path d="M.6.600L3 3.200 5.400.600" stroke="currentColor" fill="none" stroke-width="1"/></svg></div>
<svg class="a" style="left:406.5px;top:2.5px" width="7" height="7" viewBox="0 0 7 7"><path d="M1 5l2.500-3.500L6 5z" fill="#d2d0ce" stroke="#a19f9d" stroke-width=".5"/><rect x=".5" y="5.500" width="6" height="1.200" fill="#a19f9d"/></svg>
<div class="r rg" style="left:417px;top:4.5px;font-size:4px"><svg width="3.800" height="2.600" viewBox="0 0 6 4" style="vertical-align:middle;overflow:visible"><path d="M.6.600L3 3.200 5.400.600" stroke="currentColor" fill="none" stroke-width="1"/></svg></div>
<svg class="a" style="left:406.5px;top:12.5px" width="7" height="7" viewBox="0 0 7 7"><rect x=".5" y="1.500" width="5" height="4.500" fill="#fff" stroke="#a19f9d" stroke-width=".7"/><path d="M2.500 5L6 1" stroke="#a19f9d" stroke-width=".8"/></svg>
<div class="r rg" style="left:417px;top:14.5px;font-size:4px"><svg width="3.800" height="2.600" viewBox="0 0 6 4" style="vertical-align:middle;overflow:visible"><path d="M.6.600L3 3.200 5.400.600" stroke="currentColor" fill="none" stroke-width="1"/></svg></div>
<svg class="a" style="left:406.5px;top:23px" width="7" height="7" viewBox="0 0 7 7"><circle cx="3.500" cy="3.500" r="2.800" fill="#edebe9" stroke="#a19f9d" stroke-width=".7"/><circle cx="3.500" cy="3.500" r="1" fill="#a19f9d"/></svg>
<div class="r rg" style="left:417px;top:25.5px;font-size:4px"><svg width="3.800" height="2.600" viewBox="0 0 6 4" style="vertical-align:middle;overflow:visible"><path d="M.6.600L3 3.200 5.400.600" stroke="currentColor" fill="none" stroke-width="1"/></svg></div>
<div class="rl" style="left:343px;width:60px;text-align:center;top:35px;">Малювання</div>
<svg class="a" style="left:423.5px;top:35px" width="4" height="4" viewBox="0 0 4 4"><path d="M.5.500h3v3M3.500 3.500l-2-2" stroke="#605e5c" stroke-width=".5" fill="none"/></svg>
<div class="a" style="left:429px;top:4px;width:1px;height:33px;background:#e3e1df"></div>
<svg class="a" style="left:439px;top:1.5px" width="14" height="14" viewBox="0 0 14 14"><circle cx="8.500" cy="5" r="4" fill="#fff" stroke="#605e5c" stroke-width=".9"/><path d="M5.500 8L1.500 12.500" stroke="#605e5c" stroke-width="1.200"/></svg>
<div class="r" style="left:416px;width:60px;text-align:center;top:17px;">Редагування</div>
<div class="r rg" style="left:416px;width:60px;text-align:center;top:23px;font-size:5px"><svg width="3.800" height="2.600" viewBox="0 0 6 4" style="vertical-align:middle;overflow:visible"><path d="M.6.600L3 3.200 5.400.600" stroke="currentColor" fill="none" stroke-width="1"/></svg></div>
<div class="a" style="left:465px;top:4px;width:1px;height:33px;background:#e3e1df"></div>
<svg class="a" style="left:475.5px;top:1.5px" width="13" height="14" viewBox="0 0 13 14"><path d="M1.500 1h7l3 3v9h-10z" fill="#eaf2fb" stroke="#5b9bd5" stroke-width=".8"/><path d="M4 10c1-2 2-5 2-6.500M4 10c2-1.500 4-2 5.500-1.500M6 3.500c0 2 1.500 4.500 3.500 5" stroke="#2b7cd3" stroke-width=".7" fill="none"/></svg>
<div class="r" style="left:451.5px;width:60px;text-align:center;top:17px;">Створити</div>
<div class="r" style="left:451.5px;width:60px;text-align:center;top:23.3px;">PDF-файл</div>
<div class="rl" style="left:451.5px;width:60px;text-align:center;top:35px;">Adobe Acrobat</div>
<div class="a" style="left:498px;top:4px;width:1px;height:33px;background:#e3e1df"></div>
<svg class="a" style="left:511px;top:1px" width="12" height="14" viewBox="0 0 12 14"><rect x="3.500" y=".5" width="5" height="8" rx="2.500" fill="#5ea0ef"/><rect x="3.500" y=".5" width="5" height="4" rx="2.500" fill="#83b9f9"/><path d="M1.500 6.500a4.500 4.500 0 0 0 9 0M6 11v2.500" stroke="#797775" stroke-width=".8" fill="none"/></svg>
<div class="r" style="left:487px;width:60px;text-align:center;top:17px;">Надиктувати</div>
<div class="r" style="left:487px;width:60px;text-align:center;top:23px;font-size:5px"><svg width="3.800" height="2.600" viewBox="0 0 6 4" style="vertical-align:middle;overflow:visible"><path d="M.6.600L3 3.200 5.400.600" stroke="currentColor" fill="none" stroke-width="1"/></svg></div>
<div class="rl" style="left:486.5px;width:60px;text-align:center;top:35px;">Голос</div>
<div class="a" style="left:535px;top:4px;width:1px;height:33px;background:#e3e1df"></div>
<svg class="a" style="left:545.5px;top:1.5px" width="14" height="13" viewBox="0 0 14 13"><rect x=".5" y=".5" width="13" height="12" fill="#fff" stroke="#d86a3d" stroke-width="1"/><rect x="2.500" y="2.500" width="3.500" height="3.500" fill="#e8825d"/><rect x="8" y="2.500" width="3.500" height="3.500" fill="#e8825d"/><rect x="2.500" y="7.500" width="3.500" height="3.500" fill="#e8825d"/><rect x="8" y="7.500" width="3.500" height="3.500" fill="#e8825d"/></svg>
<div class="r" style="left:522.5px;width:60px;text-align:center;top:17px;">Надбудови</div>
<div class="rl" style="left:522px;width:60px;text-align:center;top:35px;">Надбудови</div>
<div class="a" style="left:569px;top:4px;width:1px;height:33px;background:#e3e1df"></div>
<svg class="a" style="left:581px;top:1.5px" width="15" height="13" viewBox="0 0 15 13"><rect x="2" y="3" width="12" height="9" fill="#fff" stroke="#605e5c" stroke-width=".9"/><rect x="3.500" y="5" width="3" height="6" fill="#c8c6c4"/><path d="M4 0L1 4.500h2.500L2.500 8 6 3.500H3.800z" fill="#f2b834" stroke="#c98d12" stroke-width=".3"/></svg>
<div class="r" style="left:558.5px;width:60px;text-align:center;top:17px;">Конструктор</div>
<div class="r" style="left:629px;top:32.5px;font-size:6px;color:#605e5c"><svg width="3.800" height="2.600" viewBox="0 0 6 4" style="vertical-align:middle;overflow:visible"><path d="M.6.600L3 3.200 5.400.600" stroke="currentColor" fill="none" stroke-width="1"/></svg></div>
</div>
  <div class="a" style="left:0px;top:75px;width:97px;height:258px;background:#e9e7e7;"></div>
  <div class="a" style="left:97px;top:75px;width:0.7px;height:258px;background:#d6d3d3;"></div>
  <div class="t" style="left:6.5px;top:83px;font-size:5.3px;color:#444;">1</div>
  <div class="t" style="left:6.5px;top:129px;font-size:5.3px;color:#c43e1c;">2</div>
  <div class="t" style="left:6.5px;top:175px;font-size:5.3px;color:#444;">3</div>
  <div class="t" style="left:6.5px;top:221.5px;font-size:5.3px;color:#444;">4</div>
  <div class="t" style="left:6.5px;top:267.5px;font-size:5.3px;color:#444;">5</div>
  <div class="t" style="left:6.5px;top:314px;font-size:5.3px;color:#444;">6</div>
  <div class="t" style="left:6.3px;top:89.5px;font-size:4.5px;color:#605e5c;">★</div>
  <div class="a" style="left:15.6px;top:82px;width:66.2px;height:37px;background:#fff;box-shadow:0 0 0 .5px #d0cece"></div>
  <div class="a" style="left:29px;top:82px;width:39.4px;height:5.9px;background:#1e9ad6;"></div>
  <div class="a" style="left:29px;top:106.6px;width:39.4px;height:6.1px;background:#1e9ad6;"></div>
  <div class="t" style="left:15.6px;top:93.3px;width:66.200px;text-align:center;font-size:3.100px;color:#000">Результати проблемних модулів</div>
  <div class="t" style="left:15.6px;top:99.5px;width:66.200px;text-align:center;font-size:3.600px;color:#111;font-weight:bold">навчання</div>
  <div class="t" style="left:15.6px;top:114.3px;width:66.200px;text-align:center;font-size:2.150px;color:#444">Доповів: Островський Роман Олександрович</div>
  <div class="a" style="left:14.3px;top:127.4px;width:68.2px;height:39.1px;background:#fff;border:1.200px solid #8e2a1c;border-radius:2.500px"></div>
  <svg class="a" style="left:19px;top:137px" width="21" height="18" viewBox="0 0 21 18"><path d="M0 0h16.500L20 9l-3.500 9H0z" fill="#404040"/></svg>
  <div class="t" style="left:21.5px;top:144.8px;font-size:2px;color:#fff;font-weight:bold">Global styles</div>
  <div class="a" style="left:43.2px;top:129.8px;width:37.1px;height:34.4px;background:#202020;"></div>
  <div class="a" style="left:45.2px;top:131.8px;width:15.91px;height:0.7px;background:#5f7a62;opacity:.45"></div>
  <div class="a" style="left:45.2px;top:134.3px;width:3.9px;height:0.7px;background:#6c7f8c;opacity:.45"></div>
  <div class="a" style="left:46.4px;top:135.55px;width:18.12px;height:0.7px;background:#7d8a99;opacity:.45"></div>
  <div class="a" style="left:45.2px;top:136.8px;width:7.34px;height:0.7px;background:#5f7a62;opacity:.45"></div>
  <div class="a" style="left:46.4px;top:138.05px;width:18.95px;height:0.7px;background:#8a7a66;opacity:.45"></div>
  <div class="a" style="left:46.4px;top:140.55px;width:13.76px;height:0.7px;background:#8a7a66;opacity:.45"></div>
  <div class="a" style="left:45.2px;top:141.8px;width:19.92px;height:0.7px;background:#8a7a66;opacity:.45"></div>
  <div class="a" style="left:46.4px;top:145.55px;width:5.9px;height:0.7px;background:#8a7a66;opacity:.45"></div>
  <div class="a" style="left:45.2px;top:146.8px;width:14.8px;height:0.7px;background:#8a7a66;opacity:.45"></div>
  <div class="a" style="left:46.4px;top:149.3px;width:19.82px;height:0.7px;background:#777;opacity:.45"></div>
  <div class="a" style="left:45.2px;top:150.55px;width:10.22px;height:0.7px;background:#777;opacity:.45"></div>
  <div class="a" style="left:45.2px;top:151.8px;width:8.25px;height:0.7px;background:#7d8a99;opacity:.45"></div>
  <div class="a" style="left:46.4px;top:153.05px;width:8.88px;height:0.7px;background:#777;opacity:.45"></div>
  <div class="a" style="left:46.4px;top:155.55px;width:8.5px;height:0.7px;background:#5f7a62;opacity:.45"></div>
  <div class="a" style="left:45.2px;top:156.8px;width:3.99px;height:0.7px;background:#777;opacity:.45"></div>
  <div class="a" style="left:46.4px;top:159.3px;width:16.71px;height:0.7px;background:#5f7a62;opacity:.45"></div>
  <div class="a" style="left:45.2px;top:160.55px;width:3.16px;height:0.7px;background:#8a7a66;opacity:.45"></div>
  <div class="a" style="left:45.2px;top:161.8px;width:19.61px;height:0.7px;background:#8a7a66;opacity:.45"></div>
  <div class="a" style="left:15.6px;top:175px;width:66.2px;height:36px;background:#fff;box-shadow:0 0 0 .5px #d0cece"></div>
  <div class="t" style="left:15.6px;top:178px;width:66.200px;text-align:center;font-size:5px;color:#333">Header styles</div>
  <div class="a" style="left:35.8px;top:183.6px;width:26.7px;height:0.9px;background:#e8833a;"></div>
  <div class="a" style="left:17px;top:185px;width:63.3px;height:25.8px;background:#202020;"></div>
  <div class="a" style="left:19.0px;top:187px;width:4.3px;height:0.7px;background:#6c7f8c;opacity:.45"></div>
  <div class="a" style="left:19.0px;top:189.5px;width:8.01px;height:0.7px;background:#6c7f8c;opacity:.45"></div>
  <div class="a" style="left:19.0px;top:190.75px;width:6.6px;height:0.7px;background:#6c7f8c;opacity:.45"></div>
  <div class="a" style="left:19.0px;top:192.0px;width:3.51px;height:0.7px;background:#8a7a66;opacity:.45"></div>
  <div class="a" style="left:19.0px;top:193.25px;width:8.02px;height:0.7px;background:#7d8a99;opacity:.45"></div>
  <div class="a" style="left:19.0px;top:194.5px;width:3.43px;height:0.7px;background:#6c7f8c;opacity:.45"></div>
  <div class="a" style="left:20.2px;top:195.75px;width:4.15px;height:0.7px;background:#8a7a66;opacity:.45"></div>
  <div class="a" style="left:19.0px;top:197.0px;width:7.91px;height:0.7px;background:#6c7f8c;opacity:.45"></div>
  <div class="a" style="left:20.2px;top:198.25px;width:8.5px;height:0.7px;background:#6c7f8c;opacity:.45"></div>
  <div class="a" style="left:19.0px;top:199.5px;width:3.54px;height:0.7px;background:#7d8a99;opacity:.45"></div>
  <div class="a" style="left:20.2px;top:200.75px;width:8.85px;height:0.7px;background:#777;opacity:.45"></div>
  <div class="a" style="left:20.2px;top:202.0px;width:10.95px;height:0.7px;background:#777;opacity:.45"></div>
  <div class="a" style="left:19.0px;top:203.25px;width:4.55px;height:0.7px;background:#6c7f8c;opacity:.45"></div>
  <div class="a" style="left:20.2px;top:204.5px;width:7.52px;height:0.7px;background:#5f7a62;opacity:.45"></div>
  <div class="a" style="left:19.0px;top:205.75px;width:11.43px;height:0.7px;background:#7d8a99;opacity:.45"></div>
  <div class="a" style="left:19.0px;top:207.0px;width:9.52px;height:0.7px;background:#5f7a62;opacity:.45"></div>
  <div class="a" style="left:19.0px;top:208.25px;width:11.28px;height:0.7px;background:#7d8a99;opacity:.45"></div>
  <div class="a" style="left:41.3px;top:187px;width:10.53px;height:0.7px;background:#777;opacity:.45"></div>
  <div class="a" style="left:41.3px;top:188.25px;width:8.11px;height:0.7px;background:#6c7f8c;opacity:.45"></div>
  <div class="a" style="left:40.1px;top:192.0px;width:8.72px;height:0.7px;background:#777;opacity:.45"></div>
  <div class="a" style="left:41.3px;top:193.25px;width:11.55px;height:0.7px;background:#777;opacity:.45"></div>
  <div class="a" style="left:41.3px;top:194.5px;width:10.63px;height:0.7px;background:#6c7f8c;opacity:.45"></div>
  <div class="a" style="left:41.3px;top:197.0px;width:8.26px;height:0.7px;background:#6c7f8c;opacity:.45"></div>
  <div class="a" style="left:40.1px;top:198.25px;width:5.47px;height:0.7px;background:#5f7a62;opacity:.45"></div>
  <div class="a" style="left:40.1px;top:199.5px;width:10.5px;height:0.7px;background:#8a7a66;opacity:.45"></div>
  <div class="a" style="left:40.1px;top:200.75px;width:7.73px;height:0.7px;background:#5f7a62;opacity:.45"></div>
  <div class="a" style="left:41.3px;top:203.25px;width:6.57px;height:0.7px;background:#5f7a62;opacity:.45"></div>
  <div class="a" style="left:40.1px;top:205.75px;width:4.52px;height:0.7px;background:#8a7a66;opacity:.45"></div>
  <div class="a" style="left:40.1px;top:207.0px;width:10.15px;height:0.7px;background:#777;opacity:.45"></div>
  <div class="a" style="left:41.3px;top:208.25px;width:4.25px;height:0.7px;background:#7d8a99;opacity:.45"></div>
  <div class="a" style="left:61.2px;top:187px;width:11.2px;height:0.7px;background:#5f7a62;opacity:.45"></div>
  <div class="a" style="left:61.2px;top:193.25px;width:6.43px;height:0.7px;background:#5f7a62;opacity:.45"></div>
  <div class="a" style="left:61.2px;top:194.5px;width:3.54px;height:0.7px;background:#8a7a66;opacity:.45"></div>
  <div class="a" style="left:61.2px;top:195.75px;width:3.95px;height:0.7px;background:#6c7f8c;opacity:.45"></div>
  <div class="a" style="left:61.2px;top:197.0px;width:4.3px;height:0.7px;background:#777;opacity:.45"></div>
  <div class="a" style="left:61.2px;top:198.25px;width:3.61px;height:0.7px;background:#7d8a99;opacity:.45"></div>
  <div class="a" style="left:62.4px;top:199.5px;width:8.46px;height:0.7px;background:#7d8a99;opacity:.45"></div>
  <div class="a" style="left:62.4px;top:200.75px;width:4.06px;height:0.7px;background:#5f7a62;opacity:.45"></div>
  <div class="a" style="left:61.2px;top:202.0px;width:5.68px;height:0.7px;background:#6c7f8c;opacity:.45"></div>
  <div class="a" style="left:62.4px;top:203.25px;width:9.37px;height:0.7px;background:#8a7a66;opacity:.45"></div>
  <div class="a" style="left:62.4px;top:204.5px;width:4.77px;height:0.7px;background:#8a7a66;opacity:.45"></div>
  <div class="a" style="left:62.4px;top:205.75px;width:10.87px;height:0.7px;background:#6c7f8c;opacity:.45"></div>
  <div class="a" style="left:62.4px;top:207.0px;width:5.25px;height:0.7px;background:#8a7a66;opacity:.45"></div>
  <div class="a" style="left:62.4px;top:208.25px;width:4.92px;height:0.7px;background:#8a7a66;opacity:.45"></div>
  <div class="a" style="left:15.6px;top:220.6px;width:66.2px;height:35.8px;background:#fff;box-shadow:0 0 0 .5px #d0cece"></div>
  <div class="a" style="left:15.6px;top:220.6px;width:66.2px;height:8.2px;background:linear-gradient(90deg,#0a2f48,#17587a 50%,#0a2f48);"></div>
  <div class="t" style="left:15.6px;top:223.600px;width:66.200px;text-align:center;font-size:2.600px;color:#fff;font-weight:bold">Header menu styles</div>
  <div class="a" style="left:15.6px;top:230.5px;width:66.2px;height:25.9px;background:#202020;"></div>
  <div class="a" style="left:18.8px;top:232.5px;width:8.11px;height:0.7px;background:#5f7a62;opacity:.45"></div>
  <div class="a" style="left:17.6px;top:233.75px;width:8.37px;height:0.7px;background:#7d8a99;opacity:.45"></div>
  <div class="a" style="left:17.6px;top:235.0px;width:8.61px;height:0.7px;background:#6c7f8c;opacity:.45"></div>
  <div class="a" style="left:17.6px;top:236.25px;width:4.3px;height:0.7px;background:#7d8a99;opacity:.45"></div>
  <div class="a" style="left:17.6px;top:240.0px;width:8.62px;height:0.7px;background:#7d8a99;opacity:.45"></div>
  <div class="a" style="left:17.6px;top:241.25px;width:7.83px;height:0.7px;background:#6c7f8c;opacity:.45"></div>
  <div class="a" style="left:17.6px;top:242.5px;width:5.21px;height:0.7px;background:#5f7a62;opacity:.45"></div>
  <div class="a" style="left:17.6px;top:243.75px;width:8.4px;height:0.7px;background:#7d8a99;opacity:.45"></div>
  <div class="a" style="left:17.6px;top:245.0px;width:5.69px;height:0.7px;background:#6c7f8c;opacity:.45"></div>
  <div class="a" style="left:17.6px;top:246.25px;width:5.54px;height:0.7px;background:#777;opacity:.45"></div>
  <div class="a" style="left:18.8px;top:247.5px;width:5.1px;height:0.7px;background:#6c7f8c;opacity:.45"></div>
  <div class="a" style="left:18.8px;top:248.75px;width:10.0px;height:0.7px;background:#6c7f8c;opacity:.45"></div>
  <div class="a" style="left:17.6px;top:251.25px;width:11.75px;height:0.7px;background:#8a7a66;opacity:.45"></div>
  <div class="a" style="left:18.8px;top:252.5px;width:11.32px;height:0.7px;background:#5f7a62;opacity:.45"></div>
  <div class="a" style="left:39.67px;top:232.5px;width:3.67px;height:0.7px;background:#777;opacity:.45"></div>
  <div class="a" style="left:39.67px;top:233.75px;width:5.84px;height:0.7px;background:#5f7a62;opacity:.45"></div>
  <div class="a" style="left:39.67px;top:236.25px;width:5.25px;height:0.7px;background:#6c7f8c;opacity:.45"></div>
  <div class="a" style="left:39.67px;top:237.5px;width:10.28px;height:0.7px;background:#7d8a99;opacity:.45"></div>
  <div class="a" style="left:39.67px;top:238.75px;width:7.65px;height:0.7px;background:#5f7a62;opacity:.45"></div>
  <div class="a" style="left:40.87px;top:240.0px;width:4.06px;height:0.7px;background:#8a7a66;opacity:.45"></div>
  <div class="a" style="left:40.87px;top:241.25px;width:10.9px;height:0.7px;background:#6c7f8c;opacity:.45"></div>
  <div class="a" style="left:39.67px;top:242.5px;width:6.6px;height:0.7px;background:#6c7f8c;opacity:.45"></div>
  <div class="a" style="left:40.87px;top:245.0px;width:5.36px;height:0.7px;background:#777;opacity:.45"></div>
  <div class="a" style="left:39.67px;top:246.25px;width:3.68px;height:0.7px;background:#7d8a99;opacity:.45"></div>
  <div class="a" style="left:40.87px;top:247.5px;width:3.14px;height:0.7px;background:#777;opacity:.45"></div>
  <div class="a" style="left:40.87px;top:248.75px;width:4.16px;height:0.7px;background:#7d8a99;opacity:.45"></div>
  <div class="a" style="left:39.67px;top:250.0px;width:6.53px;height:0.7px;background:#777;opacity:.45"></div>
  <div class="a" style="left:39.67px;top:253.75px;width:4.73px;height:0.7px;background:#5f7a62;opacity:.45"></div>
  <div class="a" style="left:61.73px;top:233.75px;width:6.85px;height:0.7px;background:#6c7f8c;opacity:.45"></div>
  <div class="a" style="left:61.73px;top:235.0px;width:11.8px;height:0.7px;background:#5f7a62;opacity:.45"></div>
  <div class="a" style="left:62.93px;top:236.25px;width:10.53px;height:0.7px;background:#777;opacity:.45"></div>
  <div class="a" style="left:61.73px;top:237.5px;width:11.49px;height:0.7px;background:#8a7a66;opacity:.45"></div>
  <div class="a" style="left:61.73px;top:238.75px;width:8.11px;height:0.7px;background:#777;opacity:.45"></div>
  <div class="a" style="left:61.73px;top:240.0px;width:11.36px;height:0.7px;background:#6c7f8c;opacity:.45"></div>
  <div class="a" style="left:61.73px;top:241.25px;width:7.07px;height:0.7px;background:#6c7f8c;opacity:.45"></div>
  <div class="a" style="left:61.73px;top:242.5px;width:6.37px;height:0.7px;background:#6c7f8c;opacity:.45"></div>
  <div class="a" style="left:62.93px;top:243.75px;width:11.14px;height:0.7px;background:#7d8a99;opacity:.45"></div>
  <div class="a" style="left:61.73px;top:245.0px;width:4.28px;height:0.7px;background:#6c7f8c;opacity:.45"></div>
  <div class="a" style="left:62.93px;top:246.25px;width:6.27px;height:0.7px;background:#6c7f8c;opacity:.45"></div>
  <div class="a" style="left:62.93px;top:247.5px;width:8.81px;height:0.7px;background:#6c7f8c;opacity:.45"></div>
  <div class="a" style="left:61.73px;top:248.75px;width:5.91px;height:0.7px;background:#6c7f8c;opacity:.45"></div>
  <div class="a" style="left:61.73px;top:250.0px;width:6.36px;height:0.7px;background:#8a7a66;opacity:.45"></div>
  <div class="a" style="left:61.73px;top:253.75px;width:9.26px;height:0.7px;background:#5f7a62;opacity:.45"></div>
  <div class="a" style="left:15.6px;top:266.6px;width:65.5px;height:37.6px;background:#fff;box-shadow:0 0 0 .5px #d0cece"></div>
  <div class="a" style="left:73.7px;top:266.6px;width:7.4px;height:1.6px;background:#1e9ad6;"></div>
  <div class="a" style="left:78.8px;top:266.6px;width:2.3px;height:37.6px;background:#1e9ad6;"></div>
  <div class="a" style="left:73.7px;top:302px;width:7.4px;height:2.2px;background:#1e9ad6;"></div>
  <div class="a" style="left:15.7px;top:283px;width:3.0px;height:3.8px;background:#1e9ad6;"></div>
  <div class="t" style="left:21px;top:283px;font-size:3.8px;color:#333;">Page styles</div>
  <div class="a" style="left:47.2px;top:269px;width:30.6px;height:30.7px;background:#202020;"></div>
  <div class="a" style="left:49.2px;top:271px;width:12.48px;height:0.7px;background:#8a7a66;opacity:.45"></div>
  <div class="a" style="left:49.2px;top:272.25px;width:15.02px;height:0.7px;background:#8a7a66;opacity:.45"></div>
  <div class="a" style="left:50.4px;top:273.5px;width:14.7px;height:0.7px;background:#6c7f8c;opacity:.45"></div>
  <div class="a" style="left:49.2px;top:274.75px;width:14.58px;height:0.7px;background:#777;opacity:.45"></div>
  <div class="a" style="left:50.4px;top:277.25px;width:13.98px;height:0.7px;background:#5f7a62;opacity:.45"></div>
  <div class="a" style="left:50.4px;top:278.5px;width:16.13px;height:0.7px;background:#777;opacity:.45"></div>
  <div class="a" style="left:50.4px;top:281.0px;width:13.44px;height:0.7px;background:#777;opacity:.45"></div>
  <div class="a" style="left:50.4px;top:283.5px;width:12.06px;height:0.7px;background:#7d8a99;opacity:.45"></div>
  <div class="a" style="left:49.2px;top:287.25px;width:10.66px;height:0.7px;background:#5f7a62;opacity:.45"></div>
  <div class="a" style="left:49.2px;top:288.5px;width:9.13px;height:0.7px;background:#777;opacity:.45"></div>
  <div class="a" style="left:50.4px;top:289.75px;width:10.23px;height:0.7px;background:#777;opacity:.45"></div>
  <div class="a" style="left:50.4px;top:291.0px;width:11.37px;height:0.7px;background:#8a7a66;opacity:.45"></div>
  <div class="a" style="left:49.2px;top:292.25px;width:10.61px;height:0.7px;background:#8a7a66;opacity:.45"></div>
  <div class="a" style="left:50.4px;top:293.5px;width:4.81px;height:0.7px;background:#5f7a62;opacity:.45"></div>
  <div class="a" style="left:49.2px;top:294.75px;width:12.94px;height:0.7px;background:#8a7a66;opacity:.45"></div>
  <div class="a" style="left:50.4px;top:296.0px;width:14.15px;height:0.7px;background:#777;opacity:.45"></div>
  <div class="a" style="left:50.4px;top:297.25px;width:8.72px;height:0.7px;background:#777;opacity:.45"></div>
  <div class="a" style="left:15.6px;top:313.3px;width:66.2px;height:19.7px;background:#fff;box-shadow:0 0 0 .5px #d0cece"></div>
  <svg class="a" style="left:19px;top:321.2px" width="20" height="12" viewBox="0 0 20 12"><path d="M0 0h16L19.500 9l-1 3H0z" fill="#404040"/></svg>
  <div class="t" style="left:23px;top:327px;font-size:2.5px;color:#fff;font-weight:bold">Header</div>
  <div class="a" style="left:47.2px;top:315px;width:32.8px;height:18px;background:#202020;"></div>
  <div class="a" style="left:50.4px;top:317px;width:15.13px;height:0.7px;background:#777;opacity:.45"></div>
  <div class="a" style="left:50.4px;top:318.25px;width:13.61px;height:0.7px;background:#6c7f8c;opacity:.45"></div>
  <div class="a" style="left:50.4px;top:320.75px;width:15.26px;height:0.7px;background:#777;opacity:.45"></div>
  <div class="a" style="left:50.4px;top:324.5px;width:13.29px;height:0.7px;background:#8a7a66;opacity:.45"></div>
  <div class="a" style="left:49.2px;top:327.0px;width:15.22px;height:0.7px;background:#8a7a66;opacity:.45"></div>
  <div class="a" style="left:49.2px;top:329.5px;width:15.06px;height:0.7px;background:#777;opacity:.45"></div>
  <div class="a" style="left:49.2px;top:330.75px;width:16.27px;height:0.7px;background:#777;opacity:.45"></div>
  <div class="a" style="left:92.3px;top:81.4px;width:2.7px;height:103.0px;background:#5c5c5c;border-radius:1.300px"></div>
  <svg class="a" style="left:91.3px;top:76.3px" width="5" height="4" viewBox="0 0 5 4"><path d="M.3 3.500L2.500.500 4.700 3.500z" fill="#444"/></svg>
  <svg class="a" style="left:91.3px;top:328.5px" width="5" height="4" viewBox="0 0 5 4"><path d="M.3.500L2.500 3.500 4.700.500z" fill="#444"/></svg>
  <div class="a" style="left:160.5px;top:78px;width:416.5px;height:235px;background:#fff;"></div>
  <div class="a" style="left:292px;top:171.2px;width:43.3px;height:20.2px;background:#838383"></div>
  <svg class="a" style="left:185.3px;top:132px" width="120" height="114" viewBox="0 0 120 114"><path d="M0 0h102L119 57 102 114H0z" fill="#404040"/></svg>
  <div class="t" style="left:199.3px;top:181.3px;font-size:14.35px;color:#fff;">Global styles</div>
  <div class="a" id="code"><div class="ln">1
2
3
4
5
6
7
8
9
10
11
12
13
14
15
16
17
18
19
20
21
22
23
24
25
26
27
28
29
30
31
32
33</div><div class="cd"><span class="cm">/* ------------------- GLOBAL STYLES -------------------- */</span>
<span class="sl">*</span> <span class="b1">{</span>
  <span class="pr">margin</span>: <span class="nm2">0</span>;
  <span class="pr">padding</span>: <span class="nm2">0</span>;
  <span class="pr">box-sizing</span>: <span class="vl">border-box</span>;
  <span class="pr">list-style</span>: <span class="vl">none</span>;
  <span class="pr">text-decoration</span>: <span class="vl">none</span>;
  <span class="pr">font-family</span>: <span class="vl">"Roboto"</span>, <span class="vl">serif</span>;
  <span class="pr">font-optical-sizing</span>: <span class="vl">auto</span>;
<span class="b1">}</span>

<span class="sl">span, p</span> <span class="b1">{</span>
  <span class="pr">line-height</span>: <span class="nm2">20px</span>;
<span class="b1">}</span>

<span class="sl">:root</span> <span class="b1">{</span>
  <span class="pr">--sides-offset</span>: <span class="nm2">4rem</span>;
  <span class="kw">@media</span> <span class="pr">screen and</span> <span class="b2">(</span><span class="pr">width</span> &lt;= <span class="nm2">1024px</span><span class="b2">)</span> <span class="b2">{</span>
    <span class="pr">--sides-offset</span>: <span class="nm2">4rem</span>;
  <span class="b2">}</span>
  <span class="kw">@media</span> <span class="pr">screen and</span> <span class="b2">(</span><span class="pr">width</span> &lt;= <span class="nm2">768px</span><span class="b2">)</span> <span class="b2">{</span>
    <span class="pr">--sides-offset</span>: <span class="nm2">2.5rem</span>;
  <span class="b2">}</span>
<span class="b1">}</span>

<span class="sl">body</span> <span class="b1">{</span>
  <span class="pr">font-family</span>: <span class="vl">Arial</span>, <span class="vl">sans-serif</span>;
  <span class="cm">/* background-color: #f4f4f4; */</span>
<span class="b1">}</span>

<span class="sl">a</span> <span class="b1">{</span>
  <span class="pr">color</span>: <span style="display:inline-block;width:2.600px;height:2.600px;background:#000;outline:.4px solid #aaa;vertical-align:0"></span> <span class="vl">black</span>;
<span class="b1">}</span></div></div>
  <div class="a" style="left:335.3px;top:171.2px;width:16px;height:20.2px;background:rgba(255,255,255,.07)"></div><div class="a" style="left:344.2px;top:177.3px;width:1.5px;height:1.5px;background:#ddd"></div><div class="a" style="left:344.2px;top:180.3px;width:1.5px;height:1.5px;background:#ddd"></div><div class="a" style="left:344.2px;top:183.3px;width:1.5px;height:1.5px;background:#ddd"></div>
  <div class="a" style="left:290.5px;top:174px;width:14.5px;height:14.5px;background:#2d2d2d;border-radius:50%"></div>
  <svg class="a" style="left:296.3px;top:176px" width="9.5" height="10.5" viewBox="0 0 10 11"><path d="M3 1h4v4l1.500 1.500v1H5.500V10h-1V7.500H1.500v-1L3 5z" fill="#cfd0d2"/><path d="M1 .8l8 9" stroke="#cfd0d2" stroke-width="1"/><path d="M1.800 .2l8 9" stroke="#555" stroke-width=".7"/></svg>
  <svg class="a" style="left:316.8px;top:175.8px" width="11" height="11" viewBox="0 0 11 11"><path d="M2 4h1.500L6 2v7L3.500 7H2z" fill="#b9babb"/><path d="M7.300 3.500c1 1 1 3 0 4M8.500 2.500c1.700 1.700 1.700 4.500 0 6" stroke="#b9babb" stroke-width=".8" fill="none"/><path d="M1.500 1l8 9" stroke="#b9babb" stroke-width="1"/></svg>
  <div class="a" style="left:639.3px;top:75px;width:5.7px;height:258px;background:#f4f3f3;"></div>
  <div class="a" style="left:641px;top:97.2px;width:3.3px;height:15.5px;background:#6a6a6a;border-radius:1.200px"></div>
  <svg class="a" style="left:640px;top:76px" width="5" height="4" viewBox="0 0 5 4"><path d="M.3 3.500L2.500.500 4.700 3.500z" fill="#444"/></svg>
  <svg class="a" style="left:638.5px;top:171px" width="5" height="7" viewBox="0 0 5 7"><path d="M.8.500v6M2.300 1.500L4.500 3.500 2.300 5.500" stroke="#333" stroke-width=".8" fill="none"/></svg>
  <svg class="a" style="left:640.2px;top:291px" width="5" height="8" viewBox="0 0 5 8"><path d="M.5 3.500L2.500 1l2 2.500M.5 6.500L2.500 4l2 2.500" stroke="#333" stroke-width=".8" fill="none"/></svg>
  <svg class="a" style="left:640.2px;top:300px" width="5" height="8" viewBox="0 0 5 8"><path d="M.5 1l2 2.500 2-2.500M.5 4l2 2.500 2-2.500" stroke="#333" stroke-width=".8" fill="none"/></svg>
  <div class="a" style="left:97.7px;top:317.8px;width:542.1px;height:0.6px;background:#d3d0d0;"></div>
  <div class="t" style="left:103px;top:322.2px;font-size:6.1px;color:#6b6968;">Нотатки до слайда</div>
  <div class="a" id="status"></div>
  <div class="t" style="left:6px;top:336.7px;font-size:4.1px;color:#555;">Слайд 2 з 13</div>
  <div class="t" style="left:44.5px;top:336.7px;font-size:4.1px;color:#555;">українська</div>
  <svg class="a" style="left:72px;top:334.3px" width="7" height="7" viewBox="0 0 7 7"><circle cx="3.500" cy="1.300" r=".9" fill="#333"/><path d="M1 2.800h5M3.500 2.800v2L2 6.500M3.500 4.800L5 6.500" stroke="#333" stroke-width=".7" fill="none"/></svg>
  <div class="t" style="left:80.5px;top:336.7px;font-size:4.5px;color:#555;">Спеціальні можливості: все гаразд</div>
  <svg class="a" style="left:398.5px;top:334.6px" width="6" height="6" viewBox="0 0 6 6"><path d="M.5 5h5M1.500 3.500h3M3 .5v2" stroke="#333" stroke-width=".7"/></svg>
  <div class="t" style="left:405.5px;top:336.7px;font-size:4.4px;color:#555;">Нотатки</div>
  <svg class="a" style="left:428px;top:334.6px" width="7" height="6" viewBox="0 0 7 6"><rect x=".5" y=".5" width="6" height="4" fill="none" stroke="#333" stroke-width=".7"/><path d="M2 5.500h3" stroke="#333" stroke-width=".7"/></svg>
  <div class="t" style="left:435.5px;top:336.7px;font-size:4.4px;color:#555;">Параметри відображення</div>
  <div class="a" style="left:499px;top:333.5px;width:12px;height:9.0px;background:#d4d2d2;"></div>
  <svg class="a" style="left:501.5px;top:334.8px" width="7" height="6" viewBox="0 0 7 6"><rect x=".5" y=".5" width="6" height="5" fill="none" stroke="#333" stroke-width=".8"/><rect x="2.500" y="1.500" width="3.500" height="3" fill="#333"/></svg>
  <svg class="a" style="left:519px;top:334.8px" width="7" height="6" viewBox="0 0 7 6"><rect x=".5" y=".5" width="2" height="2" fill="#444"/><rect x="4" y=".5" width="2" height="2" fill="#444"/><rect x=".5" y="3.500" width="2" height="2" fill="#444"/><rect x="4" y="3.500" width="2" height="2" fill="#444"/></svg>
  <svg class="a" style="left:535px;top:334.8px" width="7" height="6" viewBox="0 0 7 6"><rect x=".5" y=".5" width="6" height="5" fill="none" stroke="#444" stroke-width=".7"/><path d="M2 2h3M2 3.500h3" stroke="#444" stroke-width=".6"/></svg>
  <svg class="a" style="left:551.5px;top:334.8px" width="8" height="6" viewBox="0 0 8 6"><path d="M.5.500h7v3.500h-7zM2.500 5.500h3" fill="none" stroke="#333" stroke-width=".8"/></svg>
  <div class="a" style="left:571px;top:337.7px;width:44px;height:0.6px;background:#555;"></div>
  <div class="a" style="left:587.2px;top:335px;width:1.4px;height:6px;background:#444;"></div>
  <div class="a" style="left:602px;top:336.5px;width:0.5px;height:3.0px;background:#666;"></div>
  <svg class="a" style="left:636.5px;top:334.5px" width="7" height="7" viewBox="0 0 7 7"><path d="M.5 2.500V.500h2M4.500.500h2v2M6.500 4.500v2h-2M2.500 6.500h-2v-2M2.500 3.500h2" stroke="#444" stroke-width=".7" fill="none"/></svg>
  <div class="a" id="taskbar"></div>
  <svg class="a" style="left:9px;top:346.5px" width="11" height="11" viewBox="0 0 11 11"><path d="M5 1.500l4 2v4.500l-4 2-4-2V3.500z" fill="#f59b3a"/><path d="M5 5.500l4-2v4.500l-4 2z" fill="#e8742c"/><circle cx="7.500" cy="2.500" r="2.200" fill="#ef5f8f"/></svg>
  <div class="t" style="left:22px;top:347.7px;font-size:4.8px;color:#e0e0e0;">30°C</div>
  <div class="t" style="left:22px;top:354.7px;font-size:4.8px;color:#cfcfcf;">Sunny</div>
  <svg class="a" style="left:177.5px;top:348.5px" width="9" height="9" viewBox="0 0 9 9"><rect x="0" y="0" width="4.200" height="4.200" fill="#35a8f0"/><rect x="4.800" y="0" width="4.200" height="4.200" fill="#35a8f0"/><rect x="0" y="4.800" width="4.200" height="4.200" fill="#1b86e0"/><rect x="4.800" y="4.800" width="4.200" height="4.200" fill="#1b86e0"/></svg>
  <div class="a" style="left:193.5px;top:346.2px;width:92.8px;height:13.5px;background:#313133;border-radius:7px"></div>
  <svg class="a" style="left:198.5px;top:349.8px" width="6" height="6" viewBox="0 0 6 6"><circle cx="2.500" cy="2.500" r="1.900" stroke="#e6e6e6" stroke-width=".8" fill="none"/><path d="M3.900 3.900L5.600 5.600" stroke="#e6e6e6" stroke-width=".8"/></svg>
  <div class="t" style="left:209px;top:350.4px;font-size:5.9px;color:#c9c9c9;">Пошук</div>
  <svg class="a" style="left:264px;top:347.5px" width="21" height="11" viewBox="0 0 21 11"><rect x="1" y="6" width="3" height="4" fill="#3f8f7f"/><rect x="4.500" y="4" width="3" height="6" fill="#7aa6c9"/><rect x="8" y="2" width="3" height="8" fill="#c7c3d6"/><rect x="11.500" y="4.500" width="3" height="5.500" fill="#8fb1d8"/><rect x="15" y="1" width="3.500" height="9" fill="#a9a4cf"/><path d="M0 10h20" stroke="#2e7d6e" stroke-width="1"/></svg>
  <svg class="a" style="left:292px;top:348.5px" width="10" height="9" viewBox="0 0 10 9"><rect x="2.500" y=".5" width="7" height="6" rx=".8" fill="#8e8e8e"/><rect x=".5" y="2.500" width="7" height="6" rx=".8" fill="#e6e6e6"/></svg>
  <svg class="a" style="left:310px;top:347.5px" width="11" height="11" viewBox="0 0 11 11"><circle cx="5.500" cy="5.500" r="5" fill="#1b7fd1"/><path d="M1 6.500C1 3 4 1 7 1.500 9.500 2 10.500 4 10.300 5.500H5.500c0 2 2 3 4.500 2-1 2-4 3-6.500 1.500C2 8.500 1 7.500 1 6.500z" fill="#35c3c0"/><circle cx="6" cy="5.800" r="1.800" fill="#0d4fa0"/></svg>
  <div class="a" style="left:313.5px;top:359.8px;width:3.0px;height:0.8px;background:#9a9a9a;border-radius:1px"></div>
  <svg class="a" style="left:328.5px;top:348px" width="12" height="10" viewBox="0 0 12 10"><path d="M.5 1.500h4l1 1.200h6v1.500H.5z" fill="#e9a825"/><rect x=".5" y="3" width="11" height="6" rx=".6" fill="#f7cf4d"/><rect x=".5" y="7.500" width="11" height="1.500" fill="#3f8ad8"/></svg>
  <svg class="a" style="left:346.5px;top:347.5px" width="11" height="11" viewBox="0 0 11 11"><path d="M8 .8l2.500 1.200v7L8 10.200 3 5.500z" fill="#2c8fe0"/><path d="M8 .8L1.500 6.800.500 6 3 5.500.5 4 1.500 3.200 8 10.200V7.500L5 5.500 8 3.500z" fill="#1474c4"/></svg>
  <div class="a" style="left:350.5px;top:359.8px;width:3.0px;height:0.8px;background:#9a9a9a;border-radius:1px"></div>
  <svg class="a" style="left:365px;top:347.5px" width="11" height="11" viewBox="0 0 11 11"><defs><linearGradient id="cpl" x1="0" y1="0" x2="1" y2="1"><stop offset="0" stop-color="#3aa0f3"/><stop offset=".35" stop-color="#b05bdc"/><stop offset=".65" stop-color="#f0713c"/><stop offset="1" stop-color="#f6c433"/></linearGradient></defs><circle cx="5.500" cy="5.500" r="4.800" fill="url(#cpl)"/><circle cx="5.500" cy="5.500" r="1.800" fill="#1d1d1f"/></svg>
  <svg class="a" style="left:383px;top:347.5px" width="11" height="11" viewBox="0 0 11 11"><rect x=".5" y="2" width="10" height="8.500" rx="1" fill="#e9e9ea"/><path d="M3.500 2V1h4v1" stroke="#bbb" stroke-width=".8" fill="none"/><rect x="3" y="4" width="2.200" height="2.200" fill="#f25022"/><rect x="5.700" y="4" width="2.200" height="2.200" fill="#7fba00"/><rect x="3" y="6.700" width="2.200" height="2.200" fill="#00a4ef"/><rect x="5.700" y="6.700" width="2.200" height="2.200" fill="#ffb900"/></svg>
  <svg class="a" style="left:401.5px;top:347.5px" width="12" height="11" viewBox="0 0 12 11"><rect x="4" y="1.500" width="7.500" height="8" rx=".8" fill="#2a8be0"/><path d="M4 3l3.700 2.500L11.500 3" stroke="#9fd0fa" stroke-width=".8" fill="none"/><rect x=".5" y="3" width="6" height="6" rx=".8" fill="#0f5fb5"/><circle cx="3.500" cy="6" r="1.700" fill="none" stroke="#fff" stroke-width=".9"/></svg>
  <svg class="a" style="left:421px;top:348px" width="10" height="10" viewBox="0 0 10 10"><rect x=".5" y=".5" width="9" height="9" rx="1.200" fill="#0a66c2"/><rect x="2" y="4" width="1.300" height="3.800" fill="#fff"/><circle cx="2.650" cy="2.700" r=".8" fill="#fff"/><path d="M4.500 7.800V4h1.200v.6c.8-1 2.500-.8 2.500.8v2.400H7V5.700c0-1-1.300-1-1.300 0v2.100z" fill="#fff"/></svg>
  <svg class="a" style="left:439.5px;top:347.5px" width="11" height="11" viewBox="0 0 11 11"><circle cx="5.500" cy="5.500" r="5" fill="#1ed760"/><path d="M2.800 4c2-.6 4-.4 5.700.5M3 5.700c1.700-.5 3.300-.3 4.700.4M3.300 7.300c1.300-.3 2.600-.2 3.700.4" stroke="#111" stroke-width=".9" fill="none" stroke-linecap="round"/></svg>
  <div class="a" style="left:455.5px;top:344.5px;width:16.0px;height:16.5px;background:#343436;border-radius:2px"></div>
  <svg class="a" style="left:458px;top:347.3px" width="11" height="11" viewBox="0 0 11 11"><circle cx="5.500" cy="5.500" r="5" fill="#d35230"/><path d="M5.500.5a5 5 0 0 1 5 5h-5z" fill="#ff8f6b"/><rect x="0" y="2.500" width="6" height="6" rx=".8" fill="#c43e1c"/><path d="M2 7V4h1.500c1.300 0 1.300 1.800 0 1.800H2" stroke="#fff" stroke-width=".8" fill="none"/></svg>
  <div class="a" style="left:460.5px;top:359.6px;width:6.0px;height:1.0px;background:#e9663c;border-radius:1px"></div>
  <div class="t" style="left:624.5px;top:346.8px;font-size:4.5px;color:#cfcfcf;">15:36</div>
  <div class="t" style="left:613px;top:354.2px;font-size:4.7px;color:#f0f0f0;">24.04.2025</div>
  <div class="a" style="left:614.1px;top:330.8px;width:21.2px;height:21.2px;background:rgba(66,68,70,.8);border-radius:50%"></div>
  <svg class="a" style="left:619.3px;top:335.6px" width="11" height="11" viewBox="0 0 11 11"><circle cx="4.500" cy="4.500" r="3.300" stroke="#f1f3f4" stroke-width="1.100" fill="#f1f3f4"/><path d="M7 7l3 3" stroke="#f1f3f4" stroke-width="1.300"/><path d="M3 4.500h3M4.500 3v3" stroke="#5f6368" stroke-width=".8"/></svg>
</div>
<!-- TILES -->
<div class="tile" style="left:8px;top:446px;width:71px;height:59px;border-radius:4.500px;background:#6d9cf0">
<svg class="a" style="left:1.500px;top:1.500px;border-radius:3px" width="68" height="56" viewBox="0 0 68 56"><defs><filter id="bl1" x="-10%" y="-10%" width="120%" height="120%"><feGaussianBlur stdDeviation="0.8"/></filter><filter id="bl1b" x="-10%" y="-10%" width="120%" height="120%"><feGaussianBlur stdDeviation="1.300"/></filter><pattern id="wp" width="10" height="13" patternUnits="userSpaceOnUse"><rect width="10" height="13" fill="#7a7560"/><ellipse cx="5" cy="6.500" rx="2.800" ry="4.400" fill="#4a4738"/><ellipse cx="5" cy="6.500" rx="1.200" ry="2" fill="#8a8570"/><circle cx="0" cy="0" r="2.200" fill="#9a957f"/><circle cx="10" cy="13" r="2.200" fill="#9a957f"/><circle cx="10" cy="0" r="2.200" fill="#9a957f"/><circle cx="0" cy="13" r="2.200" fill="#9a957f"/></pattern></defs>
<g filter="url(#bl1b)"><rect x="-3" y="-3" width="74" height="62" fill="url(#wp)"/><rect x="44" y="-3" width="28" height="30" fill="#8a8262" opacity=".35"/></g>
<g filter="url(#bl1)">
<rect x="22.500" y="-3" width="21" height="38" fill="#e6e5e2"/><rect x="24" y="-3" width="15" height="17" fill="#fdfdfd"/>
<path d="M51 30c5-4 14-3 18 0v12H51z" fill="#78808c"/><path d="M44 26c4-3 9-2 11 2l-1 8h-10z" fill="#8d7a66"/>
<ellipse cx="38.500" cy="24" rx="10.500" ry="11.500" fill="#392b28"/>
<rect x="45.500" y="17" width="3.500" height="17" rx="1.700" fill="#19181b"/>
<ellipse cx="35.500" cy="29.500" rx="8.200" ry="11" fill="#bd9584"/>
<path d="M27 22c2-7 14-8 18-1-5-2-12-2-18 1z" fill="#392b28"/>
<path d="M27.500 27.800h6.500v3.200h-6.500zM35.500 27.800h8v3.200h-8z" fill="#a58478" stroke="#2a2120" stroke-width=".7"/>
<path d="M31 38.500c2 .8 4 .8 6 0" stroke="#7f5149" stroke-width="1" fill="none"/>
<path d="M-3 58c2-12 13-18 25-20l7 5 12-4c12 1 24 6 29 19z" fill="#1a1c21"/>
<path d="M22 41l7 4 10-4-3 6h-9z" fill="#2a2c33"/>
</g></svg>
<div class="a" style="left:52.400px;top:5.400px;width:13.400px;height:13.400px;border-radius:50%;background:#1a6fe0"></div>
<div class="a" style="left:55.800px;top:10.300px;width:1.600px;height:3.600px;border-radius:.8px;background:#fff"></div>
<div class="a" style="left:58.300px;top:8.800px;width:1.600px;height:6.600px;border-radius:.8px;background:#fff"></div>
<div class="a" style="left:60.800px;top:10.300px;width:1.600px;height:3.600px;border-radius:.8px;background:#fff"></div>
<div class="nm" style="top:44.800px;left:8.700px">Роман Остров...</div>
</div>
<div class="tile" style="left:85.100px">
<svg class="a" style="left:0;top:0" width="71" height="59" viewBox="0 0 71 59"><defs><filter id="bl2" x="-10%" y="-10%" width="120%" height="120%"><feGaussianBlur stdDeviation="0.9"/></filter></defs>
<g filter="url(#bl2)"><rect x="-3" y="-3" width="77" height="65" fill="#c2bfba"/>
<rect x="-3" y="-3" width="77" height="7.500" fill="#7f7c78"/><rect x="2" y="0" width="9" height="4" fill="#55524f"/><rect x="22" y="0" width="12" height="4" fill="#3f3e3d"/><rect x="44" y="-1" width="22" height="6" fill="#8f6a50"/>
<rect x="-3" y="4.500" width="77" height="7" fill="#7f5f4a"/>
<rect x="-3" y="11.500" width="77" height="7.500" fill="#d2cfc9"/>
<g><rect x="1" y="21" width="3" height="17" fill="#e2ded6"/><rect x="4" y="20" width="3" height="18" fill="#9a5f3a"/><rect x="7" y="21" width="2.500" height="17" fill="#d2cbbb"/><rect x="9.500" y="20" width="3" height="18" fill="#7f5234"/><rect x="12.500" y="21" width="3" height="17" fill="#e0d9ca"/><rect x="15.500" y="20" width="3" height="18" fill="#468f8f"/><rect x="18.500" y="20" width="3" height="18" fill="#e4e1da"/><rect x="21.500" y="21" width="3" height="17" fill="#52a5aa"/><rect x="24.500" y="20" width="3" height="18" fill="#634232"/><rect x="27.500" y="21" width="3" height="17" fill="#cfcbc1"/>
<rect x="53" y="16" width="3" height="21" fill="#8a6a55"/><rect x="56" y="17" width="3" height="20" fill="#37838e"/><rect x="59" y="18" width="3" height="19" fill="#dedad0"/><rect x="62" y="17" width="3" height="20" fill="#4468ad"/><rect x="65" y="18" width="3" height="19" fill="#2a579c"/><rect x="68" y="17" width="4" height="20" fill="#5a8a8f"/></g>
<rect x="50" y="8" width="24" height="9" fill="#6f5a4c"/>
<rect x="-3" y="37.500" width="77" height="3.300" fill="#7f5f4a"/>
<rect x="-3" y="40.800" width="77" height="22" fill="#aeaaa3"/>
<rect x="0" y="48" width="10" height="11" fill="#75634f"/><rect x="8" y="44" width="14" height="5" fill="#c4bfae"/><rect x="58" y="46" width="14" height="13" fill="#867c70"/>
<path d="M7 62c0-10 10-15 21-16l8 4 8-4c12 1 22 6 24 16z" fill="#373c52"/>
<path d="M29 45l7 5 7-5 2 17H28z" fill="#5b71b3"/><path d="M35 50h3.500l1 12h-5.500z" fill="#343f73"/>
<ellipse cx="40.500" cy="19" rx="14.500" ry="13" fill="#e4e2e1"/>
<path d="M27 22c0 6 1 10 3 13l2-12zM54.500 22c0 6-1 10-3 13l-2-12z" fill="#b9b5b2"/>
<ellipse cx="41.500" cy="30.500" rx="11" ry="15" fill="#c0988a"/>
<path d="M29.500 20c4-6 20-6 24.500 0-5-2.500-19.500-2.500-24.500 0z" fill="#e4e2e1"/>
<path d="M32.500 26.500h7.500v3h-7.500zM43 26.500h7.500v3H43z" fill="#9a776b" stroke="#5d463f" stroke-width=".5"/>
<path d="M40 31l-1.500 5h5z" fill="#b18878"/>
<path d="M37.500 39.500h8" stroke="#7f544c" stroke-width="1.100"/>
<path d="M33 40c2 6 14 6 17 0-1 5-4 7-8.500 7S34 45 33 40z" fill="#b08a7c"/>
</g></svg>
<div class="nm" style="letter-spacing:-.18px">Миколайович С...</div><svg class="a" style="left:53.5px;top:7.5px" width="9" height="9" viewBox="0 0 9 9"><path d="M4.500 1a1.100 1.100 0 0 0-1.100 1.100v2.300a1.100 1.100 0 0 0 2.200 0V2.100A1.100 1.100 0 0 0 4.500 1z" fill="#fff"/><path d="M2.300 4.300a2.200 2.200 0 0 0 4.400 0M4.500 6.500V8" stroke="#e8eaed" stroke-width=".7" fill="none"/><path d="M1.300 1.200l6.500 6.800" stroke="#e8eaed" stroke-width=".9"/><path d="M2 .7l6.500 6.800" stroke="#2b2c2f" stroke-width=".6"/></svg></div>
<div class="tile" style="left:161.800px">
<svg class="a" style="left:0;top:0" width="71" height="59" viewBox="0 0 71 59"><defs><filter id="bl3" x="-10%" y="-10%" width="120%" height="120%"><feGaussianBlur stdDeviation="0.9"/></filter><linearGradient id="g3" x1="0" y1="0" x2="1" y2="1"><stop offset="0" stop-color="#cfcac2"/><stop offset=".3" stop-color="#dfdbd5"/><stop offset="1" stop-color="#cbc7bf"/></linearGradient></defs>
<g filter="url(#bl3)"><rect x="-3" y="-3" width="77" height="65" fill="url(#g3)"/>
<rect x="-3" y="-3" width="6" height="65" fill="#a39e96" opacity=".75"/>
<path d="M0 62c1-8 10-12 24-13h26c10 1 20 4 22 13z" fill="#33322f"/>
<path d="M35 50c3 4 10 4 13 0l4 12H31z" fill="#a39f95"/>
<ellipse cx="44" cy="35.500" rx="13.500" ry="17.300" fill="#cfab9c"/>
<path d="M30.800 34c-1.200-8 2.500-14 7.500-15.500-4 3-5.500 8-6 14.500zM57.200 34c1.200-8-2.500-14-7.500-15.500 4 3 5.500 8 6 14.500z" fill="#8a7468" opacity=".8"/>
<ellipse cx="44" cy="25.500" rx="10" ry="7" fill="#dcbcae"/>
<path d="M33.500 37.500h9v5h-9zM46 37.500h9v5h-9zM42.500 39h3.500" fill="none" stroke="#7d6760" stroke-width=".6"/>
<path d="M35.500 39.500h5M48 39.500h5" stroke="#8d6e64" stroke-width=".9"/>
<path d="M44 41l-1.800 5h4z" fill="#b78c7c"/>
<path d="M40 48.500c2.500 1 6 1 8.500 0" stroke="#8f625a" stroke-width="1.200" fill="none"/>
<path d="M36 46c2 6 14 6 16 0-1 8-4 9.500-8 9.500s-7-1.500-8-9.500z" fill="#bf9a8b"/>
</g></svg>
<div class="nm">Владислав Лу...</div><div class="mu" style="background:rgba(95,93,90,.78)"></div><svg class="a" style="left:53.5px;top:7.5px" width="9" height="9" viewBox="0 0 9 9"><path d="M4.500 1a1.100 1.100 0 0 0-1.100 1.100v2.300a1.100 1.100 0 0 0 2.200 0V2.100A1.100 1.100 0 0 0 4.500 1z" fill="#fff"/><path d="M2.300 4.300a2.200 2.200 0 0 0 4.400 0M4.500 6.500V8" stroke="#e8eaed" stroke-width=".7" fill="none"/><path d="M1.300 1.200l6.500 6.800" stroke="#e8eaed" stroke-width=".9"/><path d="M2 .7l6.500 6.800" stroke="#2b2c2f" stroke-width=".6"/></svg></div>
<div class="tile" style="left:238.700px"><div class="av" style="background:#14907f">С</div><div class="nm">Станіслав Кос...</div><div class="mu" style="background:#2f3134"></div><svg class="a" style="left:53.5px;top:7.5px" width="9" height="9" viewBox="0 0 9 9"><path d="M4.500 1a1.100 1.100 0 0 0-1.100 1.100v2.300a1.100 1.100 0 0 0 2.200 0V2.100A1.100 1.100 0 0 0 4.500 1z" fill="#fff"/><path d="M2.300 4.300a2.200 2.200 0 0 0 4.400 0M4.500 6.500V8" stroke="#e8eaed" stroke-width=".7" fill="none"/><path d="M1.300 1.200l6.500 6.800" stroke="#e8eaed" stroke-width=".9"/><path d="M2 .7l6.500 6.800" stroke="#2b2c2f" stroke-width=".6"/></svg></div>
<div class="tile" style="left:315.200px">
<svg class="a" style="left:0;top:0" width="71" height="59" viewBox="0 0 71 59"><defs><filter id="bl5" x="-10%" y="-10%" width="120%" height="120%"><feGaussianBlur stdDeviation="0.9"/></filter><linearGradient id="g5" x1="0" y1="0" x2="0" y2="1"><stop offset="0" stop-color="#f1f3f0"/><stop offset=".14" stop-color="#e3e6e2"/><stop offset=".3" stop-color="#aeb2ad"/><stop offset="1" stop-color="#979c96"/></linearGradient></defs>
<g filter="url(#bl5)"><rect x="-3" y="-3" width="77" height="65" fill="url(#g5)"/>
<rect x="-3" y="8" width="24" height="54" fill="#c3c6c2" opacity=".7"/>
<path d="M6 62c1-10 10-17 22-18h18c12 1 22 8 24 18z" fill="#252b37"/>
<path d="M30 47h12l3 15H26z" fill="#39414f"/>
<path d="M26 16c2-10 17-13 26-6 7 5 9 18 7 28-1 6-5 9-10 9l-8-6-11 2c-4-6-6-18-4-27z" fill="#80593f"/>
<ellipse cx="35" cy="29" rx="8.300" ry="14" fill="#d9b9a8"/>
<path d="M26.500 22c2-7 12-10 18-5-6 0-12 2-18 5z" fill="#80593f"/>
<path d="M43 17c5 4 6 20 2 28l8-2c5-8 4-22-2-28z" fill="#80593f"/>
<path d="M29 27.500h4.500M37.500 27.500h4.500" stroke="#6a4a3e" stroke-width=".9"/>
<path d="M32 38c1.800.8 4.200.8 6 0" stroke="#a2665f" stroke-width="1.100" fill="none"/>
<path d="M28 41c3 4 9 5 14 2l2 6H28z" fill="#c09c8a"/>
</g></svg>
<div class="nm">Дар'я Решетні...</div><div class="mu" style="background:rgba(70,70,68,.8)"></div><svg class="a" style="left:53.5px;top:7.5px" width="9" height="9" viewBox="0 0 9 9"><path d="M4.500 1a1.100 1.100 0 0 0-1.100 1.100v2.300a1.100 1.100 0 0 0 2.200 0V2.100A1.100 1.100 0 0 0 4.500 1z" fill="#fff"/><path d="M2.300 4.300a2.200 2.200 0 0 0 4.400 0M4.500 6.500V8" stroke="#e8eaed" stroke-width=".7" fill="none"/><path d="M1.300 1.200l6.500 6.800" stroke="#e8eaed" stroke-width=".9"/><path d="M2 .7l6.500 6.800" stroke="#2b2c2f" stroke-width=".6"/></svg></div>
<div class="tile" style="left:392px"><div class="av" style="background:#2e7d32">Р</div><div class="nm">Радислав Сол...</div><div class="mu" style="background:#2f3134"></div><svg class="a" style="left:53.5px;top:7.5px" width="9" height="9" viewBox="0 0 9 9"><path d="M4.500 1a1.100 1.100 0 0 0-1.100 1.100v2.300a1.100 1.100 0 0 0 2.200 0V2.100A1.100 1.100 0 0 0 4.500 1z" fill="#fff"/><path d="M2.300 4.300a2.200 2.200 0 0 0 4.400 0M4.500 6.500V8" stroke="#e8eaed" stroke-width=".7" fill="none"/><path d="M1.300 1.200l6.500 6.800" stroke="#e8eaed" stroke-width=".9"/><path d="M2 .7l6.500 6.800" stroke="#2b2c2f" stroke-width=".6"/></svg></div>
<div class="tile" style="left:468.800px"><div class="av" style="background:#f0511e">А</div><div class="nm">Артем Руденко</div><div class="mu" style="background:#2f3134"></div><svg class="a" style="left:53.5px;top:7.5px" width="9" height="9" viewBox="0 0 9 9"><path d="M4.500 1a1.100 1.100 0 0 0-1.100 1.100v2.300a1.100 1.100 0 0 0 2.200 0V2.100A1.100 1.100 0 0 0 4.500 1z" fill="#fff"/><path d="M2.300 4.300a2.200 2.200 0 0 0 4.400 0M4.500 6.500V8" stroke="#e8eaed" stroke-width=".7" fill="none"/><path d="M1.300 1.200l6.500 6.800" stroke="#e8eaed" stroke-width=".9"/><path d="M2 .7l6.500 6.800" stroke="#2b2c2f" stroke-width=".6"/></svg></div>
<div class="tile" style="left:545.500px"><div class="av" style="background:#14907f">І</div><div class="nm" style="left:9px;letter-spacing:-.3px">Ігор Гайч</div><div class="mu" style="background:#2f3134"></div><svg class="a" style="left:53.5px;top:7.5px" width="9" height="9" viewBox="0 0 9 9"><path d="M4.500 1a1.100 1.100 0 0 0-1.100 1.100v2.300a1.100 1.100 0 0 0 2.200 0V2.100A1.100 1.100 0 0 0 4.500 1z" fill="#fff"/><path d="M2.300 4.300a2.200 2.200 0 0 0 4.400 0M4.500 6.500V8" stroke="#e8eaed" stroke-width=".7" fill="none"/><path d="M1.300 1.200l6.500 6.800" stroke="#e8eaed" stroke-width=".9"/><path d="M2 .7l6.500 6.800" stroke="#2b2c2f" stroke-width=".6"/></svg></div>
<div class="tile" style="left:622px">
<svg class="a" style="left:0;top:8.700px" width="71" height="40.500" viewBox="0 0 71 40.500"><defs><filter id="bl9" x="-10%" y="-10%" width="120%" height="120%"><feGaussianBlur stdDeviation="0.8"/></filter><clipPath id="cl9"><rect width="71" height="40.500"/></clipPath></defs>
<g clip-path="url(#cl9)"><g filter="url(#bl9)"><rect x="-3" y="-3" width="77" height="47" fill="#f1f1ef"/>
<rect x="23.300" y="-3" width="52" height="47" fill="#cf9745"/>
<rect x="27" y="-3" width="1.500" height="47" fill="#a9722c"/><rect x="40" y="-3" width="1.500" height="47" fill="#a9722c"/><rect x="49" y="-3" width="1.300" height="47" fill="#9d6a29"/><rect x="58" y="-3" width="1.500" height="47" fill="#a9722c"/><rect x="66" y="-3" width="1.300" height="47" fill="#b27a31"/>
<rect x="42" y="8" width="6" height="3" fill="#9b6526"/><rect x="51" y="16" width="6" height="24" fill="#d19c50"/><rect x="60" y="4" width="5" height="36" fill="#d4a055"/>
<path d="M10 44c0-12 1-22 5-30 4-9 20-10 26-2 5 8 5 22 4 32z" fill="#6f5f52"/>
<ellipse cx="29" cy="27" rx="10" ry="14" fill="#d4b0a3"/>
<path d="M18 19c2-8 18-9 22-1-7-2-15-1.500-22 1z" fill="#6f5f52"/>
<path d="M19.500 24.500h8v4h-8zM30.500 24.500h8v4h-8z" fill="#c4a196" stroke="#2c2523" stroke-width=".8"/>
<path d="M25 36c2 1 6 1 8 0" stroke="#a0695f" stroke-width="1" fill="none"/>
</g></g></svg>
<div class="nm">Олена Михайл...</div><svg class="a" style="left:53.5px;top:7.5px" width="9" height="9" viewBox="0 0 9 9"><path d="M4.500 1a1.100 1.100 0 0 0-1.100 1.100v2.300a1.100 1.100 0 0 0 2.200 0V2.100A1.100 1.100 0 0 0 4.500 1z" fill="#fff"/><path d="M2.300 4.300a2.200 2.200 0 0 0 4.400 0M4.500 6.500V8" stroke="#e8eaed" stroke-width=".7" fill="none"/><path d="M1.300 1.200l6.500 6.800" stroke="#e8eaed" stroke-width=".9"/><path d="M2 .7l6.500 6.800" stroke="#2b2c2f" stroke-width=".6"/></svg></div>
<!-- CONTROLS -->
<div class="t" style="left:12.800px;top:521.200px;font-size:6.900px;color:#fff;letter-spacing:.65px" id="clk">09:39</div>
<div class="t" style="left:45.300px;top:521.300px;font-size:7.100px;color:#fff;letter-spacing:.88px" id="mcode">cie-bcwz-nuo</div>
<div class="a" style="left:212px;top:513px;width:21px;height:22.3px;background:#6e1711;border-radius:4.500px 0 0 4.500px"></div>
<div class="a" style="left:231.3px;top:513px;width:23.7px;height:22.3px;background:#f9dedc;border-radius:4.500px"></div>
<svg class="a" style="left:218.5px;top:521.5px" width="6" height="5" viewBox="0 0 6 5"><path d="M1 3.800L3 1.600l2 2.200" stroke="#f9dedc" stroke-width=".9" fill="none"/></svg>
<svg class="a" style="left:237.5px;top:518px" width="11" height="13" viewBox="0 0 11 13"><path d="M5.500 1.500a1.500 1.500 0 0 0-1.500 1.500v3a1.500 1.500 0 0 0 3 0V3a1.500 1.500 0 0 0-1.500-1.500z" fill="#5c1a14"/><path d="M2.500 6a3 3 0 0 0 6 0M5.500 9v2" stroke="#5c1a14" stroke-width=".9" fill="none"/><path d="M1.500 1.500l8 9.500" stroke="#5c1a14" stroke-width="1.100"/><path d="M2.400 .9l8 9.500" stroke="#f9dedc" stroke-width=".8"/></svg>
<div class="a" style="left:259px;top:513px;width:43.2px;height:22.3px;background:#28292c;border-radius:11.200px"></div>
<div class="a" style="left:279px;top:513px;width:23.2px;height:22.3px;background:#3a3c40;border-radius:11.200px"></div>
<svg class="a" style="left:266px;top:521.5px" width="6" height="5" viewBox="0 0 6 5"><path d="M1 3.800L3 1.600l2 2.200" stroke="#c4c7c5" stroke-width=".8" fill="none"/></svg>
<svg class="a" style="left:285px;top:519.5px" width="12" height="10" viewBox="0 0 12 10"><rect x="1" y="1.300" width="7" height="7" rx="1" stroke="#e3e3e3" stroke-width="1.100" fill="none"/><path d="M8.500 4l2.500-1.800v5.600L8.500 6z" fill="#e3e3e3"/></svg>
<div class="a" style="left:306.7px;top:513px;width:27.0px;height:22.3px;background:#333537;border-radius:11.200px"></div>
<div class="a" style="left:337.9px;top:513px;width:27.0px;height:22.3px;background:#333537;border-radius:11.200px"></div>
<div class="a" style="left:369.8px;top:513px;width:27.0px;height:22.3px;background:#333537;border-radius:11.200px"></div>
<div class="a" style="left:401.2px;top:513px;width:27.0px;height:22.3px;background:#333537;border-radius:11.200px"></div>
<svg class="a" style="left:314.5px;top:519.5px" width="11" height="10" viewBox="0 0 11 10"><rect x="1" y="1.300" width="9" height="7.400" rx="1" stroke="#e3e3e3" stroke-width="1.100" fill="none"/><rect x="2.500" y="4.300" width="2.500" height="1.600" fill="#e3e3e3"/><rect x="6" y="4.300" width="2.500" height="1.600" fill="#e3e3e3"/></svg>
<svg class="a" style="left:345.5px;top:518.5px" width="12" height="12" viewBox="0 0 12 12"><circle cx="6" cy="6" r="4.600" stroke="#e3e3e3" stroke-width="1.100" fill="none"/><circle cx="4.300" cy="4.800" r=".8" fill="#e3e3e3"/><circle cx="7.700" cy="4.800" r=".8" fill="#e3e3e3"/><path d="M3.500 6.800a2.600 2.600 0 0 0 5 0z" fill="#e3e3e3"/></svg>
<svg class="a" style="left:377.5px;top:519.5px" width="12" height="10" viewBox="0 0 12 10"><rect x="1" y="1" width="10" height="8" rx="1" stroke="#e3e3e3" stroke-width="1.100" fill="none"/><path d="M6 7.200V4M4.300 5.200L6 3.500l1.700 1.700" stroke="#e3e3e3" stroke-width="1" fill="none"/></svg>
<svg class="a" style="left:409px;top:517.5px" width="12" height="13" viewBox="0 0 12 13"><path d="M3 7V3.200a.7.700 0 0 1 1.400 0V6.500V2a.7.700 0 0 1 1.400 0v4.300V1.600a.7.700 0 0 1 1.400 0V6.300V2.600a.7.700 0 0 1 1.400 0V8c0 2.500-1.300 4-3.300 4-1.600 0-2.500-.7-3.300-2L1 7.600c-.3-.6.500-1.100 1-.6z" stroke="#e3e3e3" stroke-width=".9" fill="none" stroke-linejoin="round"/></svg>
<div class="a" style="left:432px;top:513px;width:17.6px;height:22.3px;background:#333537;border-radius:8.800px"></div>
<svg class="a" style="left:439px;top:519px" width="4" height="11" viewBox="0 0 4 11"><circle cx="2" cy="1.800" r="1" fill="#e3e3e3"/><circle cx="2" cy="5.400" r="1" fill="#e3e3e3"/><circle cx="2" cy="9" r="1" fill="#e3e3e3"/></svg>
<div class="a" style="left:454px;top:512.5px;width:35.5px;height:23.5px;background:#dc362e;border-radius:11.800px"></div>
<svg class="a" style="left:465.5px;top:520.5px" width="13" height="7" viewBox="0 0 13 7"><path d="M1 4.800C3.500 1.600 9.500 1.600 12 4.800l-1.400 1.300-1.800-1V3.700c-1.400-.5-3.200-.5-4.600 0v1.400l-1.800 1z" fill="#fff"/></svg>
<svg class="a" style="left:582px;top:518.5px" width="12" height="12" viewBox="0 0 12 12"><circle cx="6" cy="6" r="4.800" stroke="#e3e3e3" stroke-width="1.100" fill="none"/><rect x="5.400" y="5.300" width="1.200" height="3.300" fill="#e3e3e3"/><circle cx="6" cy="3.700" r=".8" fill="#e3e3e3"/></svg>
<svg class="a" style="left:605px;top:519px" width="13" height="11" viewBox="0 0 13 11"><circle cx="5" cy="3.200" r="1.900" stroke="#e3e3e3" stroke-width="1" fill="none"/><path d="M1 9.500c0-2.300 1.800-3.200 4-3.200s4 .9 4 3.200z" stroke="#e3e3e3" stroke-width="1" fill="#e3e3e3" fill-opacity=".55"/><path d="M8.300 1.400a2 2 0 0 1 0 3.700M10 6.600c1.400.5 2.200 1.400 2.200 2.900h-1.500" stroke="#e3e3e3" stroke-width="1" fill="none"/></svg>
<div class="a" style="left:612px;top:509.6px;width:14.2px;height:7.6px;background:#4d5054;border-radius:3.800px"></div>
<div class="t" style="left:612px;width:14.200px;text-align:center;top:511.400px;font-size:4.600px;color:#e8eaed;font-weight:bold">10</div>
<svg class="a" style="left:630.2px;top:519px" width="11.400" height="10.500" viewBox="0 0 13 12"><path d="M1.500 1.500h10v7.500h-7.500l-2.500 2.300z" stroke="#e3e3e3" stroke-width="1.100" fill="none" stroke-linejoin="round"/><rect x="3.500" y="4" width="6" height="2.300" fill="#e3e3e3"/></svg>
<svg class="a" style="left:654.7px;top:520.2px" width="8.600" height="8.600" viewBox="0 0 10 10"><rect x="0.3" y="0.3" width="2.200" height="2.200" fill="#e3e3e3"/><rect x="0.3" y="3.8" width="2.200" height="2.200" fill="#e3e3e3"/><rect x="0.3" y="7.3" width="2.200" height="2.200" fill="#e3e3e3"/><rect x="3.8" y="0.3" width="2.200" height="2.200" fill="#e3e3e3"/><rect x="3.8" y="3.8" width="2.200" height="2.200" fill="#e3e3e3"/><rect x="3.8" y="7.3" width="2.200" height="2.200" fill="#e3e3e3"/><rect x="7.3" y="0.3" width="2.200" height="2.200" fill="#e3e3e3"/><rect x="7.3" y="3.8" width="2.200" height="2.200" fill="#e3e3e3"/><rect x="7.3" y="7.3" width="2.200" height="2.200" fill="#e3e3e3"/></svg>
<svg class="a" style="left:677px;top:518px" width="12" height="13" viewBox="0 0 12 13"><rect x="1.500" y="5" width="7" height="6.500" rx="1" stroke="#e3e3e3" stroke-width="1.100" fill="none"/><path d="M3 5V3.500a2 2 0 0 1 4 0V5" stroke="#e3e3e3" stroke-width="1.100" fill="none"/><circle cx="9" cy="10" r="2.200" fill="#131314" stroke="#e3e3e3" stroke-width=".9"/><circle cx="9" cy="10" r=".7" fill="#e3e3e3"/></svg>
<div class="a" style="left:7px;top:541px;width:11px;height:9px;background:#c9d3e6;border-radius:50%"></div>
</div>
</body>
</html>
